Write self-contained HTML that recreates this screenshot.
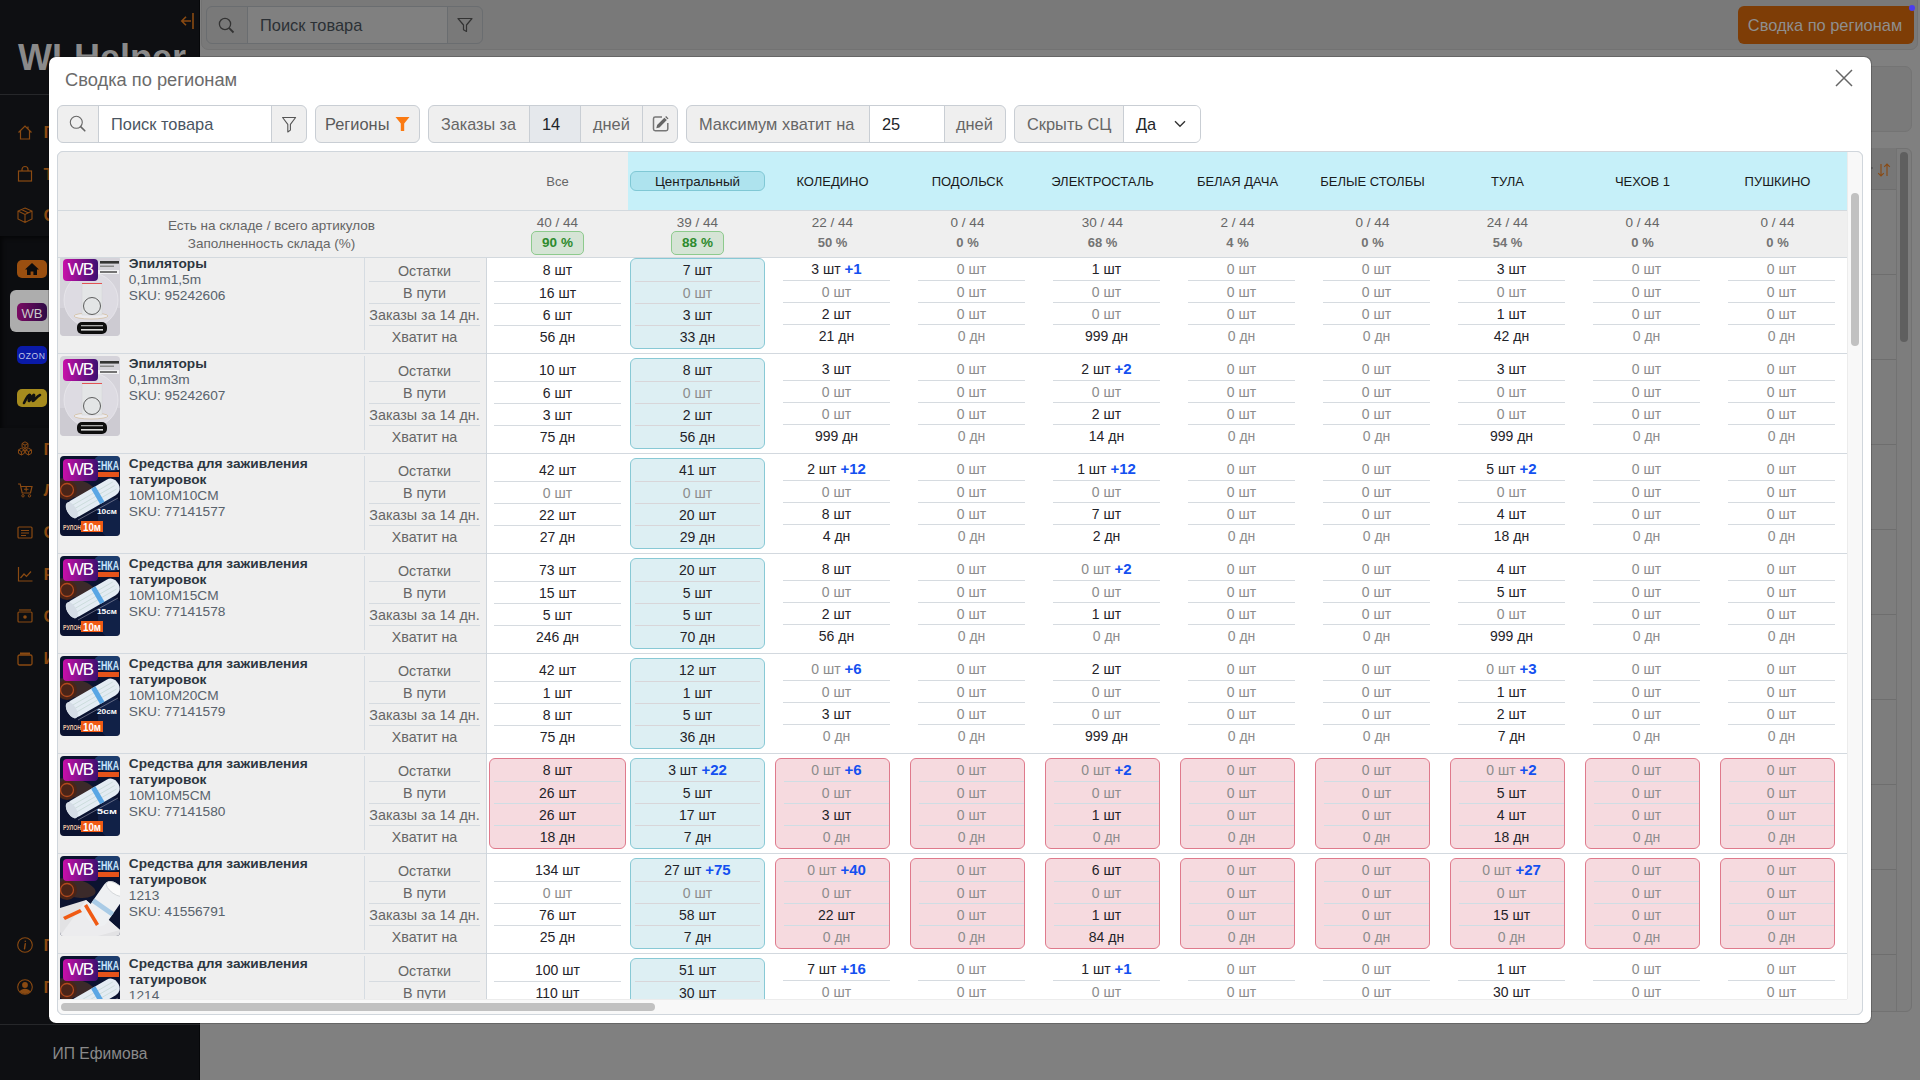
<!DOCTYPE html>
<html><head><meta charset="utf-8"><title>Сводка по регионам</title>
<style>
*{box-sizing:border-box;margin:0;padding:0}
html,body{width:1920px;height:1080px;overflow:hidden}
body{position:relative;background:#808080;font-family:"Liberation Sans",sans-serif;color:#212529}
.a{position:absolute}
.t{white-space:nowrap}
svg{position:absolute;overflow:visible}
</style></head>
<body>
<div class="a" style="left:0px;top:0px;width:200px;height:1080px;background:#0e0f12;border-right:1px solid #060709"></div><div class="a" style="left:0px;top:236px;width:199px;height:192px;background:#0c0d10;box-shadow:inset 2px 2px 4px rgba(0,0,0,0.6)"></div><div class="a" style="left:0px;top:94px;width:200px;height:1px;background:#26272a"></div><div class="a" style="left:0px;top:1024px;width:200px;height:1px;background:#26272a"></div><div class="a t" style="left:18.00px;top:39.53px;font-size:36px;line-height:36px;color:#8a8a8a;font-weight:700;">WLHelper</div><svg style="left:180px;top:12px" width="16" height="18"><path d="M13 1v16" stroke="#8a4a12" stroke-width="1.6" fill="none"/><path d="M11 9H2M6 4.8L1.8 9 6 13.2" stroke="#8a4a12" stroke-width="1.6" fill="none"/></svg><svg style="left:17px;top:124px" width="16" height="16"><path d="M1.5 8.5L8 2l6.5 6.5M3.5 6.5V15h9V6.5M11 2.5v2.5" stroke="#8a4a12" stroke-width="1.2" fill="none"/></svg><svg style="left:17px;top:166px" width="16" height="16"><rect x="1.5" y="5" width="13" height="10" stroke="#8a4a12" stroke-width="1.2" fill="none"/><path d="M5 5V3.5a3 3 0 0 1 6 0V5" stroke="#8a4a12" stroke-width="1.2" fill="none"/></svg><svg style="left:17px;top:207px" width="16" height="16"><path d="M8 1L15 4v8l-7 3.5L1 12V4z M1 4l7 3.5L15 4 M8 7.5v8 M4.5 2.5l7 3.5" stroke="#8a4a12" stroke-width="1.1" fill="none"/></svg><div class="a t" style="left:43.50px;top:123.61px;font-size:17px;line-height:17px;color:#8a4a12;font-weight:700;">Г</div><div class="a t" style="left:43.50px;top:165.61px;font-size:17px;line-height:17px;color:#8a4a12;font-weight:700;">Т</div><div class="a t" style="left:43.50px;top:206.61px;font-size:17px;line-height:17px;color:#8a4a12;font-weight:700;">С</div><div class="a" style="left:17px;top:260px;width:30px;height:18px;background:#9a4f10;border-radius:5px"></div><svg style="left:24px;top:262px" width="16" height="14"><path d="M8 1L1 7.5h2V13h3.6V9.5h2.8V13H13V7.5h2z" fill="#0b0c0e"/></svg><div class="a" style="left:10px;top:290px;width:45px;height:42px;background:#adadad;border-radius:6px"></div><div class="a" style="left:17px;top:303px;width:30px;height:18px;background:linear-gradient(90deg,#7a0b63,#2e0a45);border-radius:5px"></div><div class="a t" style="left:-268.00px;width:600px;text-align:center;top:306.50px;font-size:13px;line-height:13px;color:#c9c9c9;font-weight:400;">WB</div><div class="a" style="left:17px;top:346px;width:30px;height:18px;background:#0a1aa8;border-radius:5px"></div><div class="a t" style="left:-268.00px;width:600px;text-align:center;top:351.80px;font-size:8.5px;line-height:8.5px;color:#c0c4e6;font-weight:400;letter-spacing:0.6px">OZON</div><div class="a" style="left:17px;top:389px;width:30px;height:18px;background:#a68b1e;border-radius:5px"></div><svg style="left:22px;top:391px" width="20" height="14"><path d="M2 12 C5 6 7 3 8 4 C9 5 6 10 7 10 C8 10 11 3 12 4 C13 5 10 10 11 10 C12 10 15 5 18 4" stroke="#111" stroke-width="2.6" fill="none" stroke-linecap="round"/></svg><svg style="left:17px;top:441px" width="16" height="16"><path d="M8 0.8000000000000003L10.9444 2.5V5.9L8 7.6L5.0556 5.9V2.5ZM5.0556 2.5L8 4.2L10.9444 2.5M8 4.2V7.6M4.4 7.199999999999999L7.3444 8.9V12.299999999999999L4.4 14.0L1.4556000000000004 12.299999999999999V8.9ZM1.4556000000000004 8.9L4.4 10.6L7.3444 8.9M4.4 10.6V14.0M11.6 7.199999999999999L14.5444 8.9V12.299999999999999L11.6 14.0L8.6556 12.299999999999999V8.9ZM8.6556 8.9L11.6 10.6L14.5444 8.9M11.6 10.6V14.0" stroke="#8a4a12" stroke-width="1" fill="none" stroke-linejoin="round"/></svg><div class="a t" style="left:43.50px;top:440.61px;font-size:17px;line-height:17px;color:#8a4a12;font-weight:700;">П</div><svg style="left:17px;top:482px" width="16" height="16"><path d="M1 2h2.2l2 9h8.3l1.5-6.5H4" stroke="#8a4a12" stroke-width="1.2" fill="none"/><circle cx="6" cy="13.8" r="1.2" stroke="#8a4a12" fill="none"/><circle cx="12.5" cy="13.8" r="1.2" stroke="#8a4a12" fill="none"/><path d="M9.2 5v4.5M7 7.2h4.5" stroke="#8a4a12" stroke-width="1.1"/></svg><div class="a t" style="left:43.50px;top:481.61px;font-size:17px;line-height:17px;color:#8a4a12;font-weight:700;">Л</div><svg style="left:17px;top:524px" width="16" height="16"><rect x="1" y="3" width="14" height="11" rx="1" stroke="#8a4a12" stroke-width="1.2" fill="none"/><path d="M4 6.5h8M4 9h8M4 11.5h5" stroke="#8a4a12" stroke-width="1.1"/></svg><div class="a t" style="left:43.50px;top:523.61px;font-size:17px;line-height:17px;color:#8a4a12;font-weight:700;">С</div><svg style="left:17px;top:566px" width="16" height="16"><path d="M1.5 1v14h14 M3.5 12l3.5-4 2.5 2.5 4.5-5" stroke="#8a4a12" stroke-width="1.2" fill="none"/></svg><div class="a t" style="left:43.50px;top:565.61px;font-size:17px;line-height:17px;color:#8a4a12;font-weight:700;">Р</div><svg style="left:17px;top:608px" width="16" height="16"><rect x="1" y="4" width="14" height="10" rx="1" stroke="#8a4a12" stroke-width="1.2" fill="none"/><path d="M2 2h12" stroke="#8a4a12" stroke-width="1.2"/><circle cx="8" cy="9" r="1.8" fill="#8a4a12"/></svg><div class="a t" style="left:43.50px;top:607.61px;font-size:17px;line-height:17px;color:#8a4a12;font-weight:700;">С</div><svg style="left:17px;top:650px" width="16" height="16"><rect x="1" y="5" width="14" height="10" rx="1.5" stroke="#8a4a12" stroke-width="1.3" fill="none"/><path d="M3 4.5h10V2.5H3z" fill="#8a4a12"/></svg><div class="a t" style="left:43.50px;top:649.61px;font-size:17px;line-height:17px;color:#8a4a12;font-weight:700;">И</div><svg style="left:17px;top:937px" width="16" height="16"><circle cx="8" cy="8" r="7.3" stroke="#8a4a12" stroke-width="1.1" fill="none"/><circle cx="8.3" cy="4.3" r="0.8" fill="#8a4a12"/><path d="M8.3 6.6L7.5 11.8" stroke="#8a4a12" stroke-width="1.4" stroke-linecap="round"/></svg><div class="a t" style="left:43.50px;top:936.61px;font-size:17px;line-height:17px;color:#8a4a12;font-weight:700;">П</div><svg style="left:17px;top:979px" width="16" height="16"><circle cx="8" cy="8" r="7.3" stroke="#8a4a12" stroke-width="1.1" fill="none"/><circle cx="8" cy="6" r="2.9" fill="#8a4a12"/><path d="M2.6 12.6C3.8 10.6 5.8 9.8 8 9.8S12.2 10.6 13.4 12.6A7.3 7.3 0 0 1 2.6 12.6Z" fill="#8a4a12"/></svg><div class="a t" style="left:43.50px;top:978.61px;font-size:17px;line-height:17px;color:#8a4a12;font-weight:700;">П</div><div class="a t" style="left:-200.00px;width:600px;text-align:center;top:1045.79px;font-size:15.6px;line-height:15.6px;color:#8a8a8a;font-weight:400;">ИП Ефимова</div><div class="a" style="left:201px;top:-6px;width:1717px;height:56px;background:#797979;border-radius:7px;border:1px solid #727272"></div><div class="a" style="left:206px;top:6px;width:277px;height:38px;background:#797979;border:1px solid #6a6d70;border-radius:6px"></div><div class="a" style="left:247px;top:7px;width:201px;height:36px;background:#808080;border-left:1px solid #6a6d70;border-right:1px solid #6a6d70"></div><div class="a t" style="left:260.00px;top:17.12px;font-size:16.4px;line-height:16.4px;color:#2b3035;font-weight:400;">Поиск товара</div><svg style="left:218px;top:17px" width="18" height="18"><circle cx="7" cy="7" r="5.6" stroke="#333" stroke-width="1.3" fill="none"/><path d="M11.2 11.2l4.3 4.3" stroke="#333" stroke-width="1.8"/></svg><svg style="left:457px;top:17px" width="16" height="16"><path d="M1 1.5h14L9.5 8v6.5l-3-1.8V8z" stroke="#333" stroke-width="1.2" fill="none" stroke-linejoin="round"/></svg><div class="a" style="left:1738px;top:6px;width:176px;height:38px;background:#7e3d06;border-radius:6px"></div><div class="a t" style="left:1525.00px;width:600px;text-align:center;top:17.12px;font-size:16.4px;line-height:16.4px;color:#8f8f8f;font-weight:400;">Сводка по регионам</div><div class="a" style="left:1909px;top:5px;width:6px;height:6px;background:#4b3cf0;border-radius:50%"></div><div class="a" style="left:1850px;top:66px;width:62px;height:66px;background:#7a7a7a;border:1px solid #747474;border-radius:7px"></div><div class="a" style="left:1850px;top:148px;width:62px;height:864px;background:#7d7d7d;border:1px solid #727272;border-radius:6px"></div><div class="a" style="left:1850px;top:148px;width:46px;height:41px;background:#777777"></div><svg style="left:1876px;top:162px" width="16" height="16"><path d="M5 2v12M2.2 11.2L5 14l2.8-2.8 M11 14V2M8.2 4.8L11 2l2.8 2.8" stroke="#8a4a12" stroke-width="1.1" fill="none"/></svg><div class="a" style="left:1871px;top:167px;width:2px;height:2px;background:#5a5a5a;border-radius:50%"></div><div class="a" style="left:1850px;top:189px;width:46px;height:1px;background:#6e6e6e"></div><div class="a" style="left:1850px;top:274px;width:46px;height:1px;background:#6e6e6e"></div><div class="a" style="left:1850px;top:359px;width:46px;height:1px;background:#6e6e6e"></div><div class="a" style="left:1850px;top:444px;width:46px;height:1px;background:#6e6e6e"></div><div class="a" style="left:1850px;top:529px;width:46px;height:1px;background:#6e6e6e"></div><div class="a" style="left:1850px;top:614px;width:46px;height:1px;background:#6e6e6e"></div><div class="a" style="left:1850px;top:699px;width:46px;height:1px;background:#6e6e6e"></div><div class="a" style="left:1850px;top:784px;width:46px;height:1px;background:#6e6e6e"></div><div class="a" style="left:1850px;top:869px;width:46px;height:1px;background:#6e6e6e"></div><div class="a" style="left:1850px;top:954px;width:46px;height:1px;background:#6e6e6e"></div><div class="a" style="left:1896px;top:148px;width:1px;height:863px;background:#727272"></div><div class="a" style="left:1900px;top:152px;width:8px;height:190px;background:#5f5f5f;border-radius:4px"></div><div class="a" style="left:48px;top:56px;width:1824px;height:968px;background:#fff;border:1px solid rgba(0,0,0,0.2);background-clip:padding-box;border-radius:8px"></div><div class="a t" style="left:65.00px;top:71.01px;font-size:18.3px;line-height:18.3px;color:#6b6b6b;font-weight:400;">Сводка по регионам</div><svg style="left:1835px;top:69px" width="18" height="18"><path d="M1 1l16 16M17 1L1 17" stroke="#666" stroke-width="1.5"/></svg><div class="a" style="left:57px;top:105px;width:250px;height:38px;background:#efefef;border:1px solid #c9ced4;border-radius:6px;overflow:hidden"></div><div class="a" style="left:98px;top:106px;width:173px;height:36px;background:#fff;"></div><div class="a" style="left:98px;top:106px;width:1px;height:36px;background:#c9ced4"></div><div class="a" style="left:271px;top:106px;width:1px;height:36px;background:#c9ced4"></div><svg style="left:69px;top:115px" width="18" height="18"><circle cx="7.3" cy="7.3" r="6" stroke="#666" stroke-width="1.1" fill="none"/><path d="M11.6 11.6l4.2 4.2" stroke="#666" stroke-width="1.6" stroke-linecap="round"/></svg><div class="a t" style="left:111.00px;top:116.32px;font-size:16.4px;line-height:16.4px;color:#4a5562;font-weight:400;">Поиск товара</div><svg style="left:280px;top:116px" width="17" height="17"><path d="M2.6 1.5h13L10.4 8.3v5.8l-2.6 1.9V8.3z" stroke="#555" stroke-width="1.1" fill="none" stroke-linejoin="round"/></svg><div class="a" style="left:315px;top:105px;width:105px;height:38px;background:#efefef;border:1px solid #c9ced4;border-radius:6px;overflow:hidden"></div><div class="a t" style="left:325.00px;top:116.32px;font-size:16.4px;line-height:16.4px;color:#5a5a5a;font-weight:400;">Регионы</div><svg style="left:395px;top:116px" width="15" height="16"><path d="M0.5 1h14L9.2 7.5V15H5.8V7.5z" fill="#fb7a12"/></svg><div class="a" style="left:428px;top:105px;width:250px;height:38px;background:#efefef;border:1px solid #c9ced4;border-radius:6px;overflow:hidden"></div><div class="a" style="left:529px;top:106px;width:51px;height:36px;background:#e5e8ec;"></div><div class="a" style="left:529px;top:106px;width:1px;height:36px;background:#c9ced4"></div><div class="a" style="left:580px;top:106px;width:1px;height:36px;background:#c9ced4"></div><div class="a" style="left:642px;top:106px;width:1px;height:36px;background:#c9ced4"></div><div class="a t" style="left:441.00px;top:116.49px;font-size:16.2px;line-height:16.2px;color:#666;font-weight:400;">Заказы за</div><div class="a t" style="left:542.00px;top:116.32px;font-size:16.4px;line-height:16.4px;color:#212529;font-weight:400;">14</div><div class="a t" style="left:593.00px;top:116.32px;font-size:16.4px;line-height:16.4px;color:#666;font-weight:400;">дней</div><svg style="left:650px;top:113px" width="20" height="20"><path d="M12 4H5.2A1.7 1.7 0 0 0 3.5 5.7V16.1A1.7 1.7 0 0 0 5.2 17.8H16.1A1.7 1.7 0 0 0 17.8 16.1V10" stroke="#777" stroke-width="1.5" fill="none"/><path d="M6.3 15.2L7.1 12L14.4 4.7L16.8 7.1L9.5 14.4Z" fill="#666"/><path d="M15.2 3.9L16.1 3L18.5 5.4L17.6 6.3Z" fill="#666"/></svg><div class="a" style="left:686px;top:105px;width:320px;height:38px;background:#efefef;border:1px solid #c9ced4;border-radius:6px;overflow:hidden"></div><div class="a" style="left:869px;top:106px;width:75px;height:36px;background:#fff;"></div><div class="a" style="left:869px;top:106px;width:1px;height:36px;background:#c9ced4"></div><div class="a" style="left:944px;top:106px;width:1px;height:36px;background:#c9ced4"></div><div class="a t" style="left:699.00px;top:116.32px;font-size:16.4px;line-height:16.4px;color:#666;font-weight:400;">Максимум хватит на</div><div class="a t" style="left:882.00px;top:116.32px;font-size:16.4px;line-height:16.4px;color:#212529;font-weight:400;">25</div><div class="a t" style="left:956.00px;top:116.32px;font-size:16.4px;line-height:16.4px;color:#666;font-weight:400;">дней</div><div class="a" style="left:1014px;top:105px;width:187px;height:38px;background:#efefef;border:1px solid #c9ced4;border-radius:6px;overflow:hidden"></div><div class="a" style="left:1123px;top:106px;width:77px;height:36px;background:#fff;border-radius:0 5px 5px 0;"></div><div class="a" style="left:1123px;top:106px;width:1px;height:36px;background:#c9ced4"></div><div class="a t" style="left:1027.00px;top:116.32px;font-size:16.4px;line-height:16.4px;color:#666;font-weight:400;">Скрыть СЦ</div><div class="a t" style="left:1136.00px;top:116.32px;font-size:16.4px;line-height:16.4px;color:#212529;font-weight:400;">Да</div><svg style="left:1174px;top:119px" width="13" height="10"><path d="M1 2.2L6 7.2l5-5" stroke="#333" stroke-width="1.4" fill="none"/></svg><div class="a" style="left:57px;top:151px;width:1806px;height:864px;background:#fff;border:1px solid #dcdfe3;border-radius:6px"></div><div class="a" style="left:58px;top:152px;width:570px;height:58px;background:#efefef;border-radius:5px 0 0 0"></div><div class="a" style="left:628px;top:152px;width:1219px;height:58px;background:#c6f0f9"></div><div class="a" style="left:58px;top:210px;width:1790px;height:1px;background:#d3d9de"></div><div class="a" style="left:58px;top:211px;width:1790px;height:46px;background:#efefef"></div><div class="a" style="left:58px;top:257px;width:1790px;height:1px;background:#d3d9de"></div><div class="a t" style="left:257.50px;width:600px;text-align:center;top:174.80px;font-size:13px;line-height:13px;color:#666;font-weight:400;">Все</div><div class="a" style="left:630px;top:171px;width:135px;height:20px;background:#aee3ee;border:1px solid #80c8d5;border-radius:6px"></div><div class="a t" style="left:397.50px;width:600px;text-align:center;top:175.46px;font-size:13.4px;line-height:13.4px;color:#1a1a1a;font-weight:400;">Центральный</div><div class="a t" style="left:532.50px;width:600px;text-align:center;top:175.00px;font-size:13px;line-height:13px;color:#1a1a1a;font-weight:400;">КОЛЕДИНО</div><div class="a t" style="left:667.50px;width:600px;text-align:center;top:175.00px;font-size:13px;line-height:13px;color:#1a1a1a;font-weight:400;">ПОДОЛЬСК</div><div class="a t" style="left:802.50px;width:600px;text-align:center;top:175.00px;font-size:13px;line-height:13px;color:#1a1a1a;font-weight:400;">ЭЛЕКТРОСТАЛЬ</div><div class="a t" style="left:937.50px;width:600px;text-align:center;top:175.00px;font-size:13px;line-height:13px;color:#1a1a1a;font-weight:400;">БЕЛАЯ ДАЧА</div><div class="a t" style="left:1072.50px;width:600px;text-align:center;top:175.00px;font-size:13px;line-height:13px;color:#1a1a1a;font-weight:400;">БЕЛЫЕ СТОЛБЫ</div><div class="a t" style="left:1207.50px;width:600px;text-align:center;top:175.00px;font-size:13px;line-height:13px;color:#1a1a1a;font-weight:400;">ТУЛА</div><div class="a t" style="left:1342.50px;width:600px;text-align:center;top:175.00px;font-size:13px;line-height:13px;color:#1a1a1a;font-weight:400;">ЧЕХОВ 1</div><div class="a t" style="left:1477.50px;width:600px;text-align:center;top:175.00px;font-size:13px;line-height:13px;color:#1a1a1a;font-weight:400;">ПУШКИНО</div><div class="a t" style="left:-28.50px;width:600px;text-align:center;top:218.57px;font-size:13.5px;line-height:13.5px;color:#666;font-weight:400;">Есть на складе / всего артикулов</div><div class="a t" style="left:-28.50px;width:600px;text-align:center;top:236.57px;font-size:13.5px;line-height:13.5px;color:#666;font-weight:400;">Заполненность склада (%)</div><div class="a t" style="left:257.50px;width:600px;text-align:center;top:216.07px;font-size:13.5px;line-height:13.5px;color:#666;font-weight:400;">40 / 44</div><div class="a" style="left:531.0px;top:231px;width:53px;height:24px;background:#d5e4d5;border:1px solid #8dca8d;border-radius:5px"></div><div class="a t" style="left:257.50px;width:600px;text-align:center;top:235.57px;font-size:13.5px;line-height:13.5px;color:#2e8b2e;font-weight:700;">90 %</div><div class="a t" style="left:397.50px;width:600px;text-align:center;top:216.07px;font-size:13.5px;line-height:13.5px;color:#666;font-weight:400;">39 / 44</div><div class="a" style="left:671.0px;top:231px;width:53px;height:24px;background:#d5e4d5;border:1px solid #8dca8d;border-radius:5px"></div><div class="a t" style="left:397.50px;width:600px;text-align:center;top:235.57px;font-size:13.5px;line-height:13.5px;color:#2e8b2e;font-weight:700;">88 %</div><div class="a t" style="left:532.50px;width:600px;text-align:center;top:216.07px;font-size:13.5px;line-height:13.5px;color:#666;font-weight:400;">22 / 44</div><div class="a t" style="left:532.50px;width:600px;text-align:center;top:235.60px;font-size:13px;line-height:13px;color:#747474;font-weight:700;">50 %</div><div class="a t" style="left:667.50px;width:600px;text-align:center;top:216.07px;font-size:13.5px;line-height:13.5px;color:#666;font-weight:400;">0 / 44</div><div class="a t" style="left:667.50px;width:600px;text-align:center;top:235.60px;font-size:13px;line-height:13px;color:#747474;font-weight:700;">0 %</div><div class="a t" style="left:802.50px;width:600px;text-align:center;top:216.07px;font-size:13.5px;line-height:13.5px;color:#666;font-weight:400;">30 / 44</div><div class="a t" style="left:802.50px;width:600px;text-align:center;top:235.60px;font-size:13px;line-height:13px;color:#747474;font-weight:700;">68 %</div><div class="a t" style="left:937.50px;width:600px;text-align:center;top:216.07px;font-size:13.5px;line-height:13.5px;color:#666;font-weight:400;">2 / 44</div><div class="a t" style="left:937.50px;width:600px;text-align:center;top:235.60px;font-size:13px;line-height:13px;color:#747474;font-weight:700;">4 %</div><div class="a t" style="left:1072.50px;width:600px;text-align:center;top:216.07px;font-size:13.5px;line-height:13.5px;color:#666;font-weight:400;">0 / 44</div><div class="a t" style="left:1072.50px;width:600px;text-align:center;top:235.60px;font-size:13px;line-height:13px;color:#747474;font-weight:700;">0 %</div><div class="a t" style="left:1207.50px;width:600px;text-align:center;top:216.07px;font-size:13.5px;line-height:13.5px;color:#666;font-weight:400;">24 / 44</div><div class="a t" style="left:1207.50px;width:600px;text-align:center;top:235.60px;font-size:13px;line-height:13px;color:#747474;font-weight:700;">54 %</div><div class="a t" style="left:1342.50px;width:600px;text-align:center;top:216.07px;font-size:13.5px;line-height:13.5px;color:#666;font-weight:400;">0 / 44</div><div class="a t" style="left:1342.50px;width:600px;text-align:center;top:235.60px;font-size:13px;line-height:13px;color:#747474;font-weight:700;">0 %</div><div class="a t" style="left:1477.50px;width:600px;text-align:center;top:216.07px;font-size:13.5px;line-height:13.5px;color:#666;font-weight:400;">0 / 44</div><div class="a t" style="left:1477.50px;width:600px;text-align:center;top:235.60px;font-size:13px;line-height:13px;color:#747474;font-weight:700;">0 %</div><div class="a" style="left:58px;top:258px;width:1790px;height:741px;overflow:hidden"><div class="a" style="left:0px;top:-5px;width:428px;height:100px;background:#efefef"></div><div class="a" style="left:0px;top:-5px;width:1790px;height:1px;background:#d3d9df"></div><div class="a" style="left:306px;top:-2px;width:1px;height:94px;background:#d6dce2"></div><div class="a" style="left:428px;top:-5px;width:1px;height:100px;background:#d0d6dc"></div><svg style="left:2px;top:-2px;border-radius:4px" width="60" height="80" viewBox="0 0 60 80"><clipPath id="c2-2"><rect width="60" height="80" rx="4"/></clipPath><g clip-path="url(#c2-2)"><rect width="60" height="80" fill="#d5d3da"/><rect y="52" width="60" height="28" fill="#cdcbd2"/><circle cx="31" cy="44" r="27" fill="#dddbe2" stroke="#e8e7ec" stroke-width="0.8"/><ellipse cx="31" cy="60" rx="17" ry="3" fill="#ecebef" stroke="#c9ab78" stroke-width="0.5"/><rect x="22" y="27" width="20" height="32" fill="#e3e5e6" stroke="#d2d4d6" stroke-width="0.5"/><rect x="22" y="27" width="20" height="1" fill="#e25454"/><circle cx="32" cy="50" r="8.5" fill="none" stroke="#3a3a3a" stroke-width="0.8"/><rect x="17" y="66" width="30" height="12" rx="5" fill="#0e0e0e"/><rect x="21" y="69" width="22" height="1.3" fill="#aaa"/><rect x="21" y="73" width="22" height="1.6" fill="#ddd"/><rect x="40" y="5" width="19" height="2.6" fill="#333"/><rect x="40" y="9.5" width="14" height="1.5" fill="#888"/><rect x="38" y="14" width="21" height="4" fill="#f2f2f4"/><rect x="40" y="15.2" width="17" height="1.6" fill="#555"/></g></svg><div class="a" style="left:5px;top:1px;width:35px;height:22px;border-radius:4px;background:linear-gradient(90deg,#c80fa9,#3c0f70);color:#fff;font:17px/22px 'Liberation Sans';text-align:center;letter-spacing:-1px">WB</div><div class="a t" style="left:70.80px;top:-1.00px;font-size:13.7px;line-height:13.7px;color:#2c3640;font-weight:700;">Эпиляторы</div><div class="a t" style="left:70.80px;top:15.00px;font-size:13.7px;line-height:13.7px;color:#58626c;font-weight:400;">0,1mm1,5m</div><div class="a t" style="left:70.80px;top:31.00px;font-size:13.7px;line-height:13.7px;color:#58626c;font-weight:400;">SKU: 95242606</div><div class="a t" style="left:66.50px;width:600px;text-align:center;top:5.70px;font-size:14.3px;line-height:14.3px;color:#666;font-weight:400;">Остатки</div><div class="a t" style="left:66.50px;width:600px;text-align:center;top:27.90px;font-size:14.3px;line-height:14.3px;color:#666;font-weight:400;">В пути</div><div class="a t" style="left:66.50px;width:600px;text-align:center;top:49.90px;font-size:14.3px;line-height:14.3px;color:#666;font-weight:400;">Заказы за 14 дн.</div><div class="a t" style="left:66.50px;width:600px;text-align:center;top:71.90px;font-size:14.3px;line-height:14.3px;color:#666;font-weight:400;">Хватит на</div><div class="a" style="left:311px;top:23px;width:111px;height:1px;background:#d6dbe0"></div><div class="a" style="left:311px;top:45px;width:111px;height:1px;background:#d6dbe0"></div><div class="a" style="left:311px;top:67px;width:111px;height:1px;background:#d6dbe0"></div><div class="a" style="left:436px;top:23px;width:127px;height:1px;background:#d6dbe0"></div><div class="a" style="left:436px;top:45px;width:127px;height:1px;background:#d6dbe0"></div><div class="a" style="left:436px;top:67px;width:127px;height:1px;background:#d6dbe0"></div><div class="a t" style="left:199.50px;width:600px;text-align:center;top:5.15px;font-size:14px;line-height:14px;color:#1f2329;font-weight:400;"><span style="color:#1f2329">8 шт</span></div><div class="a t" style="left:199.50px;width:600px;text-align:center;top:28.15px;font-size:14px;line-height:14px;color:#1f2329;font-weight:400;"><span style="color:#1f2329">16 шт</span></div><div class="a t" style="left:199.50px;width:600px;text-align:center;top:50.15px;font-size:14px;line-height:14px;color:#1f2329;font-weight:400;"><span style="color:#1f2329">6 шт</span></div><div class="a t" style="left:199.50px;width:600px;text-align:center;top:72.15px;font-size:14px;line-height:14px;color:#1f2329;font-weight:400;"><span style="color:#1f2329">56 дн</span></div><div class="a" style="left:572px;top:0px;width:135px;height:91px;background:#ddeff3;border:1px solid #88c9d5;border-radius:6px"></div><div class="a" style="left:577px;top:23px;width:125px;height:1px;background:#d8d6d9"></div><div class="a" style="left:577px;top:45px;width:125px;height:1px;background:#d8d6d9"></div><div class="a" style="left:577px;top:67px;width:125px;height:1px;background:#d8d6d9"></div><div class="a t" style="left:339.50px;width:600px;text-align:center;top:5.15px;font-size:14px;line-height:14px;color:#1f2329;font-weight:400;"><span style="color:#1f2329">7 шт</span></div><div class="a t" style="left:339.50px;width:600px;text-align:center;top:28.15px;font-size:14px;line-height:14px;color:#1f2329;font-weight:400;"><span style="color:#8c8c8c">0 шт</span></div><div class="a t" style="left:339.50px;width:600px;text-align:center;top:50.15px;font-size:14px;line-height:14px;color:#1f2329;font-weight:400;"><span style="color:#1f2329">3 шт</span></div><div class="a t" style="left:339.50px;width:600px;text-align:center;top:72.15px;font-size:14px;line-height:14px;color:#1f2329;font-weight:400;"><span style="color:#1f2329">33 дн</span></div><div class="a" style="left:725px;top:22px;width:107px;height:1px;background:#d6dbe0"></div><div class="a" style="left:725px;top:44px;width:107px;height:1px;background:#d6dbe0"></div><div class="a" style="left:725px;top:66px;width:107px;height:1px;background:#d6dbe0"></div><div class="a t" style="left:478.50px;width:600px;text-align:center;top:4.15px;font-size:14px;line-height:14px;color:#1f2329;font-weight:400;"><span style="color:#1f2329">3 шт</span> <b style="color:#1450f0;font-size:15px">+1</b></div><div class="a t" style="left:478.50px;width:600px;text-align:center;top:27.15px;font-size:14px;line-height:14px;color:#1f2329;font-weight:400;"><span style="color:#8c8c8c">0 шт</span></div><div class="a t" style="left:478.50px;width:600px;text-align:center;top:49.15px;font-size:14px;line-height:14px;color:#1f2329;font-weight:400;"><span style="color:#1f2329">2 шт</span></div><div class="a t" style="left:478.50px;width:600px;text-align:center;top:71.15px;font-size:14px;line-height:14px;color:#1f2329;font-weight:400;"><span style="color:#1f2329">21 дн</span></div><div class="a" style="left:860px;top:22px;width:107px;height:1px;background:#d6dbe0"></div><div class="a" style="left:860px;top:44px;width:107px;height:1px;background:#d6dbe0"></div><div class="a" style="left:860px;top:66px;width:107px;height:1px;background:#d6dbe0"></div><div class="a t" style="left:613.50px;width:600px;text-align:center;top:4.15px;font-size:14px;line-height:14px;color:#1f2329;font-weight:400;"><span style="color:#8c8c8c">0 шт</span></div><div class="a t" style="left:613.50px;width:600px;text-align:center;top:27.15px;font-size:14px;line-height:14px;color:#1f2329;font-weight:400;"><span style="color:#8c8c8c">0 шт</span></div><div class="a t" style="left:613.50px;width:600px;text-align:center;top:49.15px;font-size:14px;line-height:14px;color:#1f2329;font-weight:400;"><span style="color:#8c8c8c">0 шт</span></div><div class="a t" style="left:613.50px;width:600px;text-align:center;top:71.15px;font-size:14px;line-height:14px;color:#1f2329;font-weight:400;"><span style="color:#8c8c8c">0 дн</span></div><div class="a" style="left:995px;top:22px;width:107px;height:1px;background:#d6dbe0"></div><div class="a" style="left:995px;top:44px;width:107px;height:1px;background:#d6dbe0"></div><div class="a" style="left:995px;top:66px;width:107px;height:1px;background:#d6dbe0"></div><div class="a t" style="left:748.50px;width:600px;text-align:center;top:4.15px;font-size:14px;line-height:14px;color:#1f2329;font-weight:400;"><span style="color:#1f2329">1 шт</span></div><div class="a t" style="left:748.50px;width:600px;text-align:center;top:27.15px;font-size:14px;line-height:14px;color:#1f2329;font-weight:400;"><span style="color:#8c8c8c">0 шт</span></div><div class="a t" style="left:748.50px;width:600px;text-align:center;top:49.15px;font-size:14px;line-height:14px;color:#1f2329;font-weight:400;"><span style="color:#8c8c8c">0 шт</span></div><div class="a t" style="left:748.50px;width:600px;text-align:center;top:71.15px;font-size:14px;line-height:14px;color:#1f2329;font-weight:400;"><span style="color:#1f2329">999 дн</span></div><div class="a" style="left:1130px;top:22px;width:107px;height:1px;background:#d6dbe0"></div><div class="a" style="left:1130px;top:44px;width:107px;height:1px;background:#d6dbe0"></div><div class="a" style="left:1130px;top:66px;width:107px;height:1px;background:#d6dbe0"></div><div class="a t" style="left:883.50px;width:600px;text-align:center;top:4.15px;font-size:14px;line-height:14px;color:#1f2329;font-weight:400;"><span style="color:#8c8c8c">0 шт</span></div><div class="a t" style="left:883.50px;width:600px;text-align:center;top:27.15px;font-size:14px;line-height:14px;color:#1f2329;font-weight:400;"><span style="color:#8c8c8c">0 шт</span></div><div class="a t" style="left:883.50px;width:600px;text-align:center;top:49.15px;font-size:14px;line-height:14px;color:#1f2329;font-weight:400;"><span style="color:#8c8c8c">0 шт</span></div><div class="a t" style="left:883.50px;width:600px;text-align:center;top:71.15px;font-size:14px;line-height:14px;color:#1f2329;font-weight:400;"><span style="color:#8c8c8c">0 дн</span></div><div class="a" style="left:1265px;top:22px;width:107px;height:1px;background:#d6dbe0"></div><div class="a" style="left:1265px;top:44px;width:107px;height:1px;background:#d6dbe0"></div><div class="a" style="left:1265px;top:66px;width:107px;height:1px;background:#d6dbe0"></div><div class="a t" style="left:1018.50px;width:600px;text-align:center;top:4.15px;font-size:14px;line-height:14px;color:#1f2329;font-weight:400;"><span style="color:#8c8c8c">0 шт</span></div><div class="a t" style="left:1018.50px;width:600px;text-align:center;top:27.15px;font-size:14px;line-height:14px;color:#1f2329;font-weight:400;"><span style="color:#8c8c8c">0 шт</span></div><div class="a t" style="left:1018.50px;width:600px;text-align:center;top:49.15px;font-size:14px;line-height:14px;color:#1f2329;font-weight:400;"><span style="color:#8c8c8c">0 шт</span></div><div class="a t" style="left:1018.50px;width:600px;text-align:center;top:71.15px;font-size:14px;line-height:14px;color:#1f2329;font-weight:400;"><span style="color:#8c8c8c">0 дн</span></div><div class="a" style="left:1400px;top:22px;width:107px;height:1px;background:#d6dbe0"></div><div class="a" style="left:1400px;top:44px;width:107px;height:1px;background:#d6dbe0"></div><div class="a" style="left:1400px;top:66px;width:107px;height:1px;background:#d6dbe0"></div><div class="a t" style="left:1153.50px;width:600px;text-align:center;top:4.15px;font-size:14px;line-height:14px;color:#1f2329;font-weight:400;"><span style="color:#1f2329">3 шт</span></div><div class="a t" style="left:1153.50px;width:600px;text-align:center;top:27.15px;font-size:14px;line-height:14px;color:#1f2329;font-weight:400;"><span style="color:#8c8c8c">0 шт</span></div><div class="a t" style="left:1153.50px;width:600px;text-align:center;top:49.15px;font-size:14px;line-height:14px;color:#1f2329;font-weight:400;"><span style="color:#1f2329">1 шт</span></div><div class="a t" style="left:1153.50px;width:600px;text-align:center;top:71.15px;font-size:14px;line-height:14px;color:#1f2329;font-weight:400;"><span style="color:#1f2329">42 дн</span></div><div class="a" style="left:1535px;top:22px;width:107px;height:1px;background:#d6dbe0"></div><div class="a" style="left:1535px;top:44px;width:107px;height:1px;background:#d6dbe0"></div><div class="a" style="left:1535px;top:66px;width:107px;height:1px;background:#d6dbe0"></div><div class="a t" style="left:1288.50px;width:600px;text-align:center;top:4.15px;font-size:14px;line-height:14px;color:#1f2329;font-weight:400;"><span style="color:#8c8c8c">0 шт</span></div><div class="a t" style="left:1288.50px;width:600px;text-align:center;top:27.15px;font-size:14px;line-height:14px;color:#1f2329;font-weight:400;"><span style="color:#8c8c8c">0 шт</span></div><div class="a t" style="left:1288.50px;width:600px;text-align:center;top:49.15px;font-size:14px;line-height:14px;color:#1f2329;font-weight:400;"><span style="color:#8c8c8c">0 шт</span></div><div class="a t" style="left:1288.50px;width:600px;text-align:center;top:71.15px;font-size:14px;line-height:14px;color:#1f2329;font-weight:400;"><span style="color:#8c8c8c">0 дн</span></div><div class="a" style="left:1670px;top:22px;width:107px;height:1px;background:#d6dbe0"></div><div class="a" style="left:1670px;top:44px;width:107px;height:1px;background:#d6dbe0"></div><div class="a" style="left:1670px;top:66px;width:107px;height:1px;background:#d6dbe0"></div><div class="a t" style="left:1423.50px;width:600px;text-align:center;top:4.15px;font-size:14px;line-height:14px;color:#1f2329;font-weight:400;"><span style="color:#8c8c8c">0 шт</span></div><div class="a t" style="left:1423.50px;width:600px;text-align:center;top:27.15px;font-size:14px;line-height:14px;color:#1f2329;font-weight:400;"><span style="color:#8c8c8c">0 шт</span></div><div class="a t" style="left:1423.50px;width:600px;text-align:center;top:49.15px;font-size:14px;line-height:14px;color:#1f2329;font-weight:400;"><span style="color:#8c8c8c">0 шт</span></div><div class="a t" style="left:1423.50px;width:600px;text-align:center;top:71.15px;font-size:14px;line-height:14px;color:#1f2329;font-weight:400;"><span style="color:#8c8c8c">0 дн</span></div><div class="a" style="left:0px;top:95px;width:428px;height:100px;background:#efefef"></div><div class="a" style="left:0px;top:95px;width:1790px;height:1px;background:#d3d9df"></div><div class="a" style="left:306px;top:98px;width:1px;height:94px;background:#d6dce2"></div><div class="a" style="left:428px;top:95px;width:1px;height:100px;background:#d0d6dc"></div><svg style="left:2px;top:98px;border-radius:4px" width="60" height="80" viewBox="0 0 60 80"><clipPath id="c298"><rect width="60" height="80" rx="4"/></clipPath><g clip-path="url(#c298)"><rect width="60" height="80" fill="#d5d3da"/><rect y="52" width="60" height="28" fill="#cdcbd2"/><circle cx="31" cy="44" r="27" fill="#dddbe2" stroke="#e8e7ec" stroke-width="0.8"/><ellipse cx="31" cy="60" rx="17" ry="3" fill="#ecebef" stroke="#c9ab78" stroke-width="0.5"/><rect x="22" y="27" width="20" height="32" fill="#e3e5e6" stroke="#d2d4d6" stroke-width="0.5"/><rect x="22" y="27" width="20" height="1" fill="#e25454"/><circle cx="32" cy="50" r="8.5" fill="none" stroke="#3a3a3a" stroke-width="0.8"/><rect x="17" y="66" width="30" height="12" rx="5" fill="#0e0e0e"/><rect x="21" y="69" width="22" height="1.3" fill="#aaa"/><rect x="21" y="73" width="22" height="1.6" fill="#ddd"/><rect x="40" y="5" width="19" height="2.6" fill="#333"/><rect x="40" y="9.5" width="14" height="1.5" fill="#888"/><rect x="38" y="14" width="21" height="4" fill="#f2f2f4"/><rect x="40" y="15.2" width="17" height="1.6" fill="#555"/></g></svg><div class="a" style="left:5px;top:101px;width:35px;height:22px;border-radius:4px;background:linear-gradient(90deg,#c80fa9,#3c0f70);color:#fff;font:17px/22px 'Liberation Sans';text-align:center;letter-spacing:-1px">WB</div><div class="a t" style="left:70.80px;top:99.00px;font-size:13.7px;line-height:13.7px;color:#2c3640;font-weight:700;">Эпиляторы</div><div class="a t" style="left:70.80px;top:115.00px;font-size:13.7px;line-height:13.7px;color:#58626c;font-weight:400;">0,1mm3m</div><div class="a t" style="left:70.80px;top:131.00px;font-size:13.7px;line-height:13.7px;color:#58626c;font-weight:400;">SKU: 95242607</div><div class="a t" style="left:66.50px;width:600px;text-align:center;top:105.70px;font-size:14.3px;line-height:14.3px;color:#666;font-weight:400;">Остатки</div><div class="a t" style="left:66.50px;width:600px;text-align:center;top:127.90px;font-size:14.3px;line-height:14.3px;color:#666;font-weight:400;">В пути</div><div class="a t" style="left:66.50px;width:600px;text-align:center;top:149.90px;font-size:14.3px;line-height:14.3px;color:#666;font-weight:400;">Заказы за 14 дн.</div><div class="a t" style="left:66.50px;width:600px;text-align:center;top:171.90px;font-size:14.3px;line-height:14.3px;color:#666;font-weight:400;">Хватит на</div><div class="a" style="left:311px;top:123px;width:111px;height:1px;background:#d6dbe0"></div><div class="a" style="left:311px;top:145px;width:111px;height:1px;background:#d6dbe0"></div><div class="a" style="left:311px;top:167px;width:111px;height:1px;background:#d6dbe0"></div><div class="a" style="left:436px;top:123px;width:127px;height:1px;background:#d6dbe0"></div><div class="a" style="left:436px;top:145px;width:127px;height:1px;background:#d6dbe0"></div><div class="a" style="left:436px;top:167px;width:127px;height:1px;background:#d6dbe0"></div><div class="a t" style="left:199.50px;width:600px;text-align:center;top:105.15px;font-size:14px;line-height:14px;color:#1f2329;font-weight:400;"><span style="color:#1f2329">10 шт</span></div><div class="a t" style="left:199.50px;width:600px;text-align:center;top:128.15px;font-size:14px;line-height:14px;color:#1f2329;font-weight:400;"><span style="color:#1f2329">6 шт</span></div><div class="a t" style="left:199.50px;width:600px;text-align:center;top:150.15px;font-size:14px;line-height:14px;color:#1f2329;font-weight:400;"><span style="color:#1f2329">3 шт</span></div><div class="a t" style="left:199.50px;width:600px;text-align:center;top:172.15px;font-size:14px;line-height:14px;color:#1f2329;font-weight:400;"><span style="color:#1f2329">75 дн</span></div><div class="a" style="left:572px;top:100px;width:135px;height:91px;background:#ddeff3;border:1px solid #88c9d5;border-radius:6px"></div><div class="a" style="left:577px;top:123px;width:125px;height:1px;background:#d8d6d9"></div><div class="a" style="left:577px;top:145px;width:125px;height:1px;background:#d8d6d9"></div><div class="a" style="left:577px;top:167px;width:125px;height:1px;background:#d8d6d9"></div><div class="a t" style="left:339.50px;width:600px;text-align:center;top:105.15px;font-size:14px;line-height:14px;color:#1f2329;font-weight:400;"><span style="color:#1f2329">8 шт</span></div><div class="a t" style="left:339.50px;width:600px;text-align:center;top:128.15px;font-size:14px;line-height:14px;color:#1f2329;font-weight:400;"><span style="color:#8c8c8c">0 шт</span></div><div class="a t" style="left:339.50px;width:600px;text-align:center;top:150.15px;font-size:14px;line-height:14px;color:#1f2329;font-weight:400;"><span style="color:#1f2329">2 шт</span></div><div class="a t" style="left:339.50px;width:600px;text-align:center;top:172.15px;font-size:14px;line-height:14px;color:#1f2329;font-weight:400;"><span style="color:#1f2329">56 дн</span></div><div class="a" style="left:725px;top:122px;width:107px;height:1px;background:#d6dbe0"></div><div class="a" style="left:725px;top:144px;width:107px;height:1px;background:#d6dbe0"></div><div class="a" style="left:725px;top:166px;width:107px;height:1px;background:#d6dbe0"></div><div class="a t" style="left:478.50px;width:600px;text-align:center;top:104.15px;font-size:14px;line-height:14px;color:#1f2329;font-weight:400;"><span style="color:#1f2329">3 шт</span></div><div class="a t" style="left:478.50px;width:600px;text-align:center;top:127.15px;font-size:14px;line-height:14px;color:#1f2329;font-weight:400;"><span style="color:#8c8c8c">0 шт</span></div><div class="a t" style="left:478.50px;width:600px;text-align:center;top:149.15px;font-size:14px;line-height:14px;color:#1f2329;font-weight:400;"><span style="color:#8c8c8c">0 шт</span></div><div class="a t" style="left:478.50px;width:600px;text-align:center;top:171.15px;font-size:14px;line-height:14px;color:#1f2329;font-weight:400;"><span style="color:#1f2329">999 дн</span></div><div class="a" style="left:860px;top:122px;width:107px;height:1px;background:#d6dbe0"></div><div class="a" style="left:860px;top:144px;width:107px;height:1px;background:#d6dbe0"></div><div class="a" style="left:860px;top:166px;width:107px;height:1px;background:#d6dbe0"></div><div class="a t" style="left:613.50px;width:600px;text-align:center;top:104.15px;font-size:14px;line-height:14px;color:#1f2329;font-weight:400;"><span style="color:#8c8c8c">0 шт</span></div><div class="a t" style="left:613.50px;width:600px;text-align:center;top:127.15px;font-size:14px;line-height:14px;color:#1f2329;font-weight:400;"><span style="color:#8c8c8c">0 шт</span></div><div class="a t" style="left:613.50px;width:600px;text-align:center;top:149.15px;font-size:14px;line-height:14px;color:#1f2329;font-weight:400;"><span style="color:#8c8c8c">0 шт</span></div><div class="a t" style="left:613.50px;width:600px;text-align:center;top:171.15px;font-size:14px;line-height:14px;color:#1f2329;font-weight:400;"><span style="color:#8c8c8c">0 дн</span></div><div class="a" style="left:995px;top:122px;width:107px;height:1px;background:#d6dbe0"></div><div class="a" style="left:995px;top:144px;width:107px;height:1px;background:#d6dbe0"></div><div class="a" style="left:995px;top:166px;width:107px;height:1px;background:#d6dbe0"></div><div class="a t" style="left:748.50px;width:600px;text-align:center;top:104.15px;font-size:14px;line-height:14px;color:#1f2329;font-weight:400;"><span style="color:#1f2329">2 шт</span> <b style="color:#1450f0;font-size:15px">+2</b></div><div class="a t" style="left:748.50px;width:600px;text-align:center;top:127.15px;font-size:14px;line-height:14px;color:#1f2329;font-weight:400;"><span style="color:#8c8c8c">0 шт</span></div><div class="a t" style="left:748.50px;width:600px;text-align:center;top:149.15px;font-size:14px;line-height:14px;color:#1f2329;font-weight:400;"><span style="color:#1f2329">2 шт</span></div><div class="a t" style="left:748.50px;width:600px;text-align:center;top:171.15px;font-size:14px;line-height:14px;color:#1f2329;font-weight:400;"><span style="color:#1f2329">14 дн</span></div><div class="a" style="left:1130px;top:122px;width:107px;height:1px;background:#d6dbe0"></div><div class="a" style="left:1130px;top:144px;width:107px;height:1px;background:#d6dbe0"></div><div class="a" style="left:1130px;top:166px;width:107px;height:1px;background:#d6dbe0"></div><div class="a t" style="left:883.50px;width:600px;text-align:center;top:104.15px;font-size:14px;line-height:14px;color:#1f2329;font-weight:400;"><span style="color:#8c8c8c">0 шт</span></div><div class="a t" style="left:883.50px;width:600px;text-align:center;top:127.15px;font-size:14px;line-height:14px;color:#1f2329;font-weight:400;"><span style="color:#8c8c8c">0 шт</span></div><div class="a t" style="left:883.50px;width:600px;text-align:center;top:149.15px;font-size:14px;line-height:14px;color:#1f2329;font-weight:400;"><span style="color:#8c8c8c">0 шт</span></div><div class="a t" style="left:883.50px;width:600px;text-align:center;top:171.15px;font-size:14px;line-height:14px;color:#1f2329;font-weight:400;"><span style="color:#8c8c8c">0 дн</span></div><div class="a" style="left:1265px;top:122px;width:107px;height:1px;background:#d6dbe0"></div><div class="a" style="left:1265px;top:144px;width:107px;height:1px;background:#d6dbe0"></div><div class="a" style="left:1265px;top:166px;width:107px;height:1px;background:#d6dbe0"></div><div class="a t" style="left:1018.50px;width:600px;text-align:center;top:104.15px;font-size:14px;line-height:14px;color:#1f2329;font-weight:400;"><span style="color:#8c8c8c">0 шт</span></div><div class="a t" style="left:1018.50px;width:600px;text-align:center;top:127.15px;font-size:14px;line-height:14px;color:#1f2329;font-weight:400;"><span style="color:#8c8c8c">0 шт</span></div><div class="a t" style="left:1018.50px;width:600px;text-align:center;top:149.15px;font-size:14px;line-height:14px;color:#1f2329;font-weight:400;"><span style="color:#8c8c8c">0 шт</span></div><div class="a t" style="left:1018.50px;width:600px;text-align:center;top:171.15px;font-size:14px;line-height:14px;color:#1f2329;font-weight:400;"><span style="color:#8c8c8c">0 дн</span></div><div class="a" style="left:1400px;top:122px;width:107px;height:1px;background:#d6dbe0"></div><div class="a" style="left:1400px;top:144px;width:107px;height:1px;background:#d6dbe0"></div><div class="a" style="left:1400px;top:166px;width:107px;height:1px;background:#d6dbe0"></div><div class="a t" style="left:1153.50px;width:600px;text-align:center;top:104.15px;font-size:14px;line-height:14px;color:#1f2329;font-weight:400;"><span style="color:#1f2329">3 шт</span></div><div class="a t" style="left:1153.50px;width:600px;text-align:center;top:127.15px;font-size:14px;line-height:14px;color:#1f2329;font-weight:400;"><span style="color:#8c8c8c">0 шт</span></div><div class="a t" style="left:1153.50px;width:600px;text-align:center;top:149.15px;font-size:14px;line-height:14px;color:#1f2329;font-weight:400;"><span style="color:#8c8c8c">0 шт</span></div><div class="a t" style="left:1153.50px;width:600px;text-align:center;top:171.15px;font-size:14px;line-height:14px;color:#1f2329;font-weight:400;"><span style="color:#1f2329">999 дн</span></div><div class="a" style="left:1535px;top:122px;width:107px;height:1px;background:#d6dbe0"></div><div class="a" style="left:1535px;top:144px;width:107px;height:1px;background:#d6dbe0"></div><div class="a" style="left:1535px;top:166px;width:107px;height:1px;background:#d6dbe0"></div><div class="a t" style="left:1288.50px;width:600px;text-align:center;top:104.15px;font-size:14px;line-height:14px;color:#1f2329;font-weight:400;"><span style="color:#8c8c8c">0 шт</span></div><div class="a t" style="left:1288.50px;width:600px;text-align:center;top:127.15px;font-size:14px;line-height:14px;color:#1f2329;font-weight:400;"><span style="color:#8c8c8c">0 шт</span></div><div class="a t" style="left:1288.50px;width:600px;text-align:center;top:149.15px;font-size:14px;line-height:14px;color:#1f2329;font-weight:400;"><span style="color:#8c8c8c">0 шт</span></div><div class="a t" style="left:1288.50px;width:600px;text-align:center;top:171.15px;font-size:14px;line-height:14px;color:#1f2329;font-weight:400;"><span style="color:#8c8c8c">0 дн</span></div><div class="a" style="left:1670px;top:122px;width:107px;height:1px;background:#d6dbe0"></div><div class="a" style="left:1670px;top:144px;width:107px;height:1px;background:#d6dbe0"></div><div class="a" style="left:1670px;top:166px;width:107px;height:1px;background:#d6dbe0"></div><div class="a t" style="left:1423.50px;width:600px;text-align:center;top:104.15px;font-size:14px;line-height:14px;color:#1f2329;font-weight:400;"><span style="color:#8c8c8c">0 шт</span></div><div class="a t" style="left:1423.50px;width:600px;text-align:center;top:127.15px;font-size:14px;line-height:14px;color:#1f2329;font-weight:400;"><span style="color:#8c8c8c">0 шт</span></div><div class="a t" style="left:1423.50px;width:600px;text-align:center;top:149.15px;font-size:14px;line-height:14px;color:#1f2329;font-weight:400;"><span style="color:#8c8c8c">0 шт</span></div><div class="a t" style="left:1423.50px;width:600px;text-align:center;top:171.15px;font-size:14px;line-height:14px;color:#1f2329;font-weight:400;"><span style="color:#8c8c8c">0 дн</span></div><div class="a" style="left:0px;top:195px;width:428px;height:100px;background:#efefef"></div><div class="a" style="left:0px;top:195px;width:1790px;height:1px;background:#d3d9df"></div><div class="a" style="left:306px;top:198px;width:1px;height:94px;background:#d6dce2"></div><div class="a" style="left:428px;top:195px;width:1px;height:100px;background:#d0d6dc"></div><svg style="left:2px;top:198px;border-radius:4px" width="60" height="80" viewBox="0 0 60 80"><clipPath id="c2198"><rect width="60" height="80" rx="4"/></clipPath><g clip-path="url(#c2198)"><rect width="60" height="80" fill="#0b1330"/><ellipse cx="50" cy="6" rx="16" ry="9" fill="#2a5a98" opacity="0.6"/><ellipse cx="52" cy="62" rx="14" ry="20" fill="#18305e" opacity="0.5"/><ellipse cx="14" cy="32" rx="22" ry="9" fill="#3b2a2a" transform="rotate(12 14 32)"/><circle cx="7" cy="34" r="10" fill="#4a2418"/><circle cx="7" cy="34" r="6.5" fill="none" stroke="#c9521f" stroke-width="1.3" opacity="0.8"/><g transform="rotate(-30 33 42)"><rect x="4" y="33" width="58" height="18" rx="8" fill="#e4ecf3"/><path d="M10 38h48M10 42h48M10 46h48" stroke="#b8d0c8" stroke-width="0.5"/><rect x="4" y="33" width="9" height="18" rx="8" fill="#d5dde6"/><rect x="36" y="33" width="5" height="18" fill="#5aa6e4"/></g><text x="35" y="14" font-size="12" textLength="24" lengthAdjust="spacingAndGlyphs" fill="#c8e6ff" style="font-family:'Liberation Sans';font-weight:bold">ЕНКА</text><rect x="38" y="16" width="21" height="5" fill="#e5531a"/><path d="M18 64 L58 42" stroke="#99a" stroke-width="0.6"/><text x="37" y="58" font-size="8" textLength="20" lengthAdjust="spacingAndGlyphs" fill="#fff" style="font-family:'Liberation Sans';font-weight:bold">10см</text><text x="3" y="74" font-size="7" textLength="18" lengthAdjust="spacingAndGlyphs" fill="#f0c6a4" style="font-family:'Liberation Sans';font-weight:bold">РУЛОН</text><rect x="21" y="65" width="22" height="11" fill="#f05a14"/><text x="23" y="75" font-size="10" textLength="18" lengthAdjust="spacingAndGlyphs" fill="#fff" style="font-family:'Liberation Sans';font-weight:bold">10м</text></g></svg><div class="a" style="left:5px;top:201px;width:35px;height:22px;border-radius:4px;background:linear-gradient(90deg,#c80fa9,#3c0f70);color:#fff;font:17px/22px 'Liberation Sans';text-align:center;letter-spacing:-1px">WB</div><div class="a t" style="left:70.80px;top:199.00px;font-size:13.7px;line-height:13.7px;color:#2c3640;font-weight:700;">Средства для заживления</div><div class="a t" style="left:70.80px;top:215.00px;font-size:13.7px;line-height:13.7px;color:#2c3640;font-weight:700;">татуировок</div><div class="a t" style="left:70.80px;top:231.00px;font-size:13.7px;line-height:13.7px;color:#58626c;font-weight:400;">10M10M10CM</div><div class="a t" style="left:70.80px;top:247.00px;font-size:13.7px;line-height:13.7px;color:#58626c;font-weight:400;">SKU: 77141577</div><div class="a t" style="left:66.50px;width:600px;text-align:center;top:205.70px;font-size:14.3px;line-height:14.3px;color:#666;font-weight:400;">Остатки</div><div class="a t" style="left:66.50px;width:600px;text-align:center;top:227.90px;font-size:14.3px;line-height:14.3px;color:#666;font-weight:400;">В пути</div><div class="a t" style="left:66.50px;width:600px;text-align:center;top:249.90px;font-size:14.3px;line-height:14.3px;color:#666;font-weight:400;">Заказы за 14 дн.</div><div class="a t" style="left:66.50px;width:600px;text-align:center;top:271.90px;font-size:14.3px;line-height:14.3px;color:#666;font-weight:400;">Хватит на</div><div class="a" style="left:311px;top:223px;width:111px;height:1px;background:#d6dbe0"></div><div class="a" style="left:311px;top:245px;width:111px;height:1px;background:#d6dbe0"></div><div class="a" style="left:311px;top:267px;width:111px;height:1px;background:#d6dbe0"></div><div class="a" style="left:436px;top:223px;width:127px;height:1px;background:#d6dbe0"></div><div class="a" style="left:436px;top:245px;width:127px;height:1px;background:#d6dbe0"></div><div class="a" style="left:436px;top:267px;width:127px;height:1px;background:#d6dbe0"></div><div class="a t" style="left:199.50px;width:600px;text-align:center;top:205.15px;font-size:14px;line-height:14px;color:#1f2329;font-weight:400;"><span style="color:#1f2329">42 шт</span></div><div class="a t" style="left:199.50px;width:600px;text-align:center;top:228.15px;font-size:14px;line-height:14px;color:#1f2329;font-weight:400;"><span style="color:#8c8c8c">0 шт</span></div><div class="a t" style="left:199.50px;width:600px;text-align:center;top:250.15px;font-size:14px;line-height:14px;color:#1f2329;font-weight:400;"><span style="color:#1f2329">22 шт</span></div><div class="a t" style="left:199.50px;width:600px;text-align:center;top:272.15px;font-size:14px;line-height:14px;color:#1f2329;font-weight:400;"><span style="color:#1f2329">27 дн</span></div><div class="a" style="left:572px;top:200px;width:135px;height:91px;background:#ddeff3;border:1px solid #88c9d5;border-radius:6px"></div><div class="a" style="left:577px;top:223px;width:125px;height:1px;background:#d8d6d9"></div><div class="a" style="left:577px;top:245px;width:125px;height:1px;background:#d8d6d9"></div><div class="a" style="left:577px;top:267px;width:125px;height:1px;background:#d8d6d9"></div><div class="a t" style="left:339.50px;width:600px;text-align:center;top:205.15px;font-size:14px;line-height:14px;color:#1f2329;font-weight:400;"><span style="color:#1f2329">41 шт</span></div><div class="a t" style="left:339.50px;width:600px;text-align:center;top:228.15px;font-size:14px;line-height:14px;color:#1f2329;font-weight:400;"><span style="color:#8c8c8c">0 шт</span></div><div class="a t" style="left:339.50px;width:600px;text-align:center;top:250.15px;font-size:14px;line-height:14px;color:#1f2329;font-weight:400;"><span style="color:#1f2329">20 шт</span></div><div class="a t" style="left:339.50px;width:600px;text-align:center;top:272.15px;font-size:14px;line-height:14px;color:#1f2329;font-weight:400;"><span style="color:#1f2329">29 дн</span></div><div class="a" style="left:725px;top:222px;width:107px;height:1px;background:#d6dbe0"></div><div class="a" style="left:725px;top:244px;width:107px;height:1px;background:#d6dbe0"></div><div class="a" style="left:725px;top:266px;width:107px;height:1px;background:#d6dbe0"></div><div class="a t" style="left:478.50px;width:600px;text-align:center;top:204.15px;font-size:14px;line-height:14px;color:#1f2329;font-weight:400;"><span style="color:#1f2329">2 шт</span> <b style="color:#1450f0;font-size:15px">+12</b></div><div class="a t" style="left:478.50px;width:600px;text-align:center;top:227.15px;font-size:14px;line-height:14px;color:#1f2329;font-weight:400;"><span style="color:#8c8c8c">0 шт</span></div><div class="a t" style="left:478.50px;width:600px;text-align:center;top:249.15px;font-size:14px;line-height:14px;color:#1f2329;font-weight:400;"><span style="color:#1f2329">8 шт</span></div><div class="a t" style="left:478.50px;width:600px;text-align:center;top:271.15px;font-size:14px;line-height:14px;color:#1f2329;font-weight:400;"><span style="color:#1f2329">4 дн</span></div><div class="a" style="left:860px;top:222px;width:107px;height:1px;background:#d6dbe0"></div><div class="a" style="left:860px;top:244px;width:107px;height:1px;background:#d6dbe0"></div><div class="a" style="left:860px;top:266px;width:107px;height:1px;background:#d6dbe0"></div><div class="a t" style="left:613.50px;width:600px;text-align:center;top:204.15px;font-size:14px;line-height:14px;color:#1f2329;font-weight:400;"><span style="color:#8c8c8c">0 шт</span></div><div class="a t" style="left:613.50px;width:600px;text-align:center;top:227.15px;font-size:14px;line-height:14px;color:#1f2329;font-weight:400;"><span style="color:#8c8c8c">0 шт</span></div><div class="a t" style="left:613.50px;width:600px;text-align:center;top:249.15px;font-size:14px;line-height:14px;color:#1f2329;font-weight:400;"><span style="color:#8c8c8c">0 шт</span></div><div class="a t" style="left:613.50px;width:600px;text-align:center;top:271.15px;font-size:14px;line-height:14px;color:#1f2329;font-weight:400;"><span style="color:#8c8c8c">0 дн</span></div><div class="a" style="left:995px;top:222px;width:107px;height:1px;background:#d6dbe0"></div><div class="a" style="left:995px;top:244px;width:107px;height:1px;background:#d6dbe0"></div><div class="a" style="left:995px;top:266px;width:107px;height:1px;background:#d6dbe0"></div><div class="a t" style="left:748.50px;width:600px;text-align:center;top:204.15px;font-size:14px;line-height:14px;color:#1f2329;font-weight:400;"><span style="color:#1f2329">1 шт</span> <b style="color:#1450f0;font-size:15px">+12</b></div><div class="a t" style="left:748.50px;width:600px;text-align:center;top:227.15px;font-size:14px;line-height:14px;color:#1f2329;font-weight:400;"><span style="color:#8c8c8c">0 шт</span></div><div class="a t" style="left:748.50px;width:600px;text-align:center;top:249.15px;font-size:14px;line-height:14px;color:#1f2329;font-weight:400;"><span style="color:#1f2329">7 шт</span></div><div class="a t" style="left:748.50px;width:600px;text-align:center;top:271.15px;font-size:14px;line-height:14px;color:#1f2329;font-weight:400;"><span style="color:#1f2329">2 дн</span></div><div class="a" style="left:1130px;top:222px;width:107px;height:1px;background:#d6dbe0"></div><div class="a" style="left:1130px;top:244px;width:107px;height:1px;background:#d6dbe0"></div><div class="a" style="left:1130px;top:266px;width:107px;height:1px;background:#d6dbe0"></div><div class="a t" style="left:883.50px;width:600px;text-align:center;top:204.15px;font-size:14px;line-height:14px;color:#1f2329;font-weight:400;"><span style="color:#8c8c8c">0 шт</span></div><div class="a t" style="left:883.50px;width:600px;text-align:center;top:227.15px;font-size:14px;line-height:14px;color:#1f2329;font-weight:400;"><span style="color:#8c8c8c">0 шт</span></div><div class="a t" style="left:883.50px;width:600px;text-align:center;top:249.15px;font-size:14px;line-height:14px;color:#1f2329;font-weight:400;"><span style="color:#8c8c8c">0 шт</span></div><div class="a t" style="left:883.50px;width:600px;text-align:center;top:271.15px;font-size:14px;line-height:14px;color:#1f2329;font-weight:400;"><span style="color:#8c8c8c">0 дн</span></div><div class="a" style="left:1265px;top:222px;width:107px;height:1px;background:#d6dbe0"></div><div class="a" style="left:1265px;top:244px;width:107px;height:1px;background:#d6dbe0"></div><div class="a" style="left:1265px;top:266px;width:107px;height:1px;background:#d6dbe0"></div><div class="a t" style="left:1018.50px;width:600px;text-align:center;top:204.15px;font-size:14px;line-height:14px;color:#1f2329;font-weight:400;"><span style="color:#8c8c8c">0 шт</span></div><div class="a t" style="left:1018.50px;width:600px;text-align:center;top:227.15px;font-size:14px;line-height:14px;color:#1f2329;font-weight:400;"><span style="color:#8c8c8c">0 шт</span></div><div class="a t" style="left:1018.50px;width:600px;text-align:center;top:249.15px;font-size:14px;line-height:14px;color:#1f2329;font-weight:400;"><span style="color:#8c8c8c">0 шт</span></div><div class="a t" style="left:1018.50px;width:600px;text-align:center;top:271.15px;font-size:14px;line-height:14px;color:#1f2329;font-weight:400;"><span style="color:#8c8c8c">0 дн</span></div><div class="a" style="left:1400px;top:222px;width:107px;height:1px;background:#d6dbe0"></div><div class="a" style="left:1400px;top:244px;width:107px;height:1px;background:#d6dbe0"></div><div class="a" style="left:1400px;top:266px;width:107px;height:1px;background:#d6dbe0"></div><div class="a t" style="left:1153.50px;width:600px;text-align:center;top:204.15px;font-size:14px;line-height:14px;color:#1f2329;font-weight:400;"><span style="color:#1f2329">5 шт</span> <b style="color:#1450f0;font-size:15px">+2</b></div><div class="a t" style="left:1153.50px;width:600px;text-align:center;top:227.15px;font-size:14px;line-height:14px;color:#1f2329;font-weight:400;"><span style="color:#8c8c8c">0 шт</span></div><div class="a t" style="left:1153.50px;width:600px;text-align:center;top:249.15px;font-size:14px;line-height:14px;color:#1f2329;font-weight:400;"><span style="color:#1f2329">4 шт</span></div><div class="a t" style="left:1153.50px;width:600px;text-align:center;top:271.15px;font-size:14px;line-height:14px;color:#1f2329;font-weight:400;"><span style="color:#1f2329">18 дн</span></div><div class="a" style="left:1535px;top:222px;width:107px;height:1px;background:#d6dbe0"></div><div class="a" style="left:1535px;top:244px;width:107px;height:1px;background:#d6dbe0"></div><div class="a" style="left:1535px;top:266px;width:107px;height:1px;background:#d6dbe0"></div><div class="a t" style="left:1288.50px;width:600px;text-align:center;top:204.15px;font-size:14px;line-height:14px;color:#1f2329;font-weight:400;"><span style="color:#8c8c8c">0 шт</span></div><div class="a t" style="left:1288.50px;width:600px;text-align:center;top:227.15px;font-size:14px;line-height:14px;color:#1f2329;font-weight:400;"><span style="color:#8c8c8c">0 шт</span></div><div class="a t" style="left:1288.50px;width:600px;text-align:center;top:249.15px;font-size:14px;line-height:14px;color:#1f2329;font-weight:400;"><span style="color:#8c8c8c">0 шт</span></div><div class="a t" style="left:1288.50px;width:600px;text-align:center;top:271.15px;font-size:14px;line-height:14px;color:#1f2329;font-weight:400;"><span style="color:#8c8c8c">0 дн</span></div><div class="a" style="left:1670px;top:222px;width:107px;height:1px;background:#d6dbe0"></div><div class="a" style="left:1670px;top:244px;width:107px;height:1px;background:#d6dbe0"></div><div class="a" style="left:1670px;top:266px;width:107px;height:1px;background:#d6dbe0"></div><div class="a t" style="left:1423.50px;width:600px;text-align:center;top:204.15px;font-size:14px;line-height:14px;color:#1f2329;font-weight:400;"><span style="color:#8c8c8c">0 шт</span></div><div class="a t" style="left:1423.50px;width:600px;text-align:center;top:227.15px;font-size:14px;line-height:14px;color:#1f2329;font-weight:400;"><span style="color:#8c8c8c">0 шт</span></div><div class="a t" style="left:1423.50px;width:600px;text-align:center;top:249.15px;font-size:14px;line-height:14px;color:#1f2329;font-weight:400;"><span style="color:#8c8c8c">0 шт</span></div><div class="a t" style="left:1423.50px;width:600px;text-align:center;top:271.15px;font-size:14px;line-height:14px;color:#1f2329;font-weight:400;"><span style="color:#8c8c8c">0 дн</span></div><div class="a" style="left:0px;top:295px;width:428px;height:100px;background:#efefef"></div><div class="a" style="left:0px;top:295px;width:1790px;height:1px;background:#d3d9df"></div><div class="a" style="left:306px;top:298px;width:1px;height:94px;background:#d6dce2"></div><div class="a" style="left:428px;top:295px;width:1px;height:100px;background:#d0d6dc"></div><svg style="left:2px;top:298px;border-radius:4px" width="60" height="80" viewBox="0 0 60 80"><clipPath id="c2298"><rect width="60" height="80" rx="4"/></clipPath><g clip-path="url(#c2298)"><rect width="60" height="80" fill="#0b1330"/><ellipse cx="50" cy="6" rx="16" ry="9" fill="#2a5a98" opacity="0.6"/><ellipse cx="52" cy="62" rx="14" ry="20" fill="#18305e" opacity="0.5"/><ellipse cx="14" cy="32" rx="22" ry="9" fill="#3b2a2a" transform="rotate(12 14 32)"/><circle cx="7" cy="34" r="10" fill="#4a2418"/><circle cx="7" cy="34" r="6.5" fill="none" stroke="#c9521f" stroke-width="1.3" opacity="0.8"/><g transform="rotate(-30 33 42)"><rect x="4" y="33" width="58" height="18" rx="8" fill="#e4ecf3"/><path d="M10 38h48M10 42h48M10 46h48" stroke="#b8d0c8" stroke-width="0.5"/><rect x="4" y="33" width="9" height="18" rx="8" fill="#d5dde6"/><rect x="36" y="33" width="5" height="18" fill="#5aa6e4"/></g><text x="35" y="14" font-size="12" textLength="24" lengthAdjust="spacingAndGlyphs" fill="#c8e6ff" style="font-family:'Liberation Sans';font-weight:bold">ЕНКА</text><rect x="38" y="16" width="21" height="5" fill="#e5531a"/><path d="M18 64 L58 42" stroke="#99a" stroke-width="0.6"/><text x="37" y="58" font-size="8" textLength="20" lengthAdjust="spacingAndGlyphs" fill="#fff" style="font-family:'Liberation Sans';font-weight:bold">15см</text><text x="3" y="74" font-size="7" textLength="18" lengthAdjust="spacingAndGlyphs" fill="#f0c6a4" style="font-family:'Liberation Sans';font-weight:bold">РУЛОН</text><rect x="21" y="65" width="22" height="11" fill="#f05a14"/><text x="23" y="75" font-size="10" textLength="18" lengthAdjust="spacingAndGlyphs" fill="#fff" style="font-family:'Liberation Sans';font-weight:bold">10м</text></g></svg><div class="a" style="left:5px;top:301px;width:35px;height:22px;border-radius:4px;background:linear-gradient(90deg,#c80fa9,#3c0f70);color:#fff;font:17px/22px 'Liberation Sans';text-align:center;letter-spacing:-1px">WB</div><div class="a t" style="left:70.80px;top:299.00px;font-size:13.7px;line-height:13.7px;color:#2c3640;font-weight:700;">Средства для заживления</div><div class="a t" style="left:70.80px;top:315.00px;font-size:13.7px;line-height:13.7px;color:#2c3640;font-weight:700;">татуировок</div><div class="a t" style="left:70.80px;top:331.00px;font-size:13.7px;line-height:13.7px;color:#58626c;font-weight:400;">10M10M15CM</div><div class="a t" style="left:70.80px;top:347.00px;font-size:13.7px;line-height:13.7px;color:#58626c;font-weight:400;">SKU: 77141578</div><div class="a t" style="left:66.50px;width:600px;text-align:center;top:305.70px;font-size:14.3px;line-height:14.3px;color:#666;font-weight:400;">Остатки</div><div class="a t" style="left:66.50px;width:600px;text-align:center;top:327.90px;font-size:14.3px;line-height:14.3px;color:#666;font-weight:400;">В пути</div><div class="a t" style="left:66.50px;width:600px;text-align:center;top:349.90px;font-size:14.3px;line-height:14.3px;color:#666;font-weight:400;">Заказы за 14 дн.</div><div class="a t" style="left:66.50px;width:600px;text-align:center;top:371.90px;font-size:14.3px;line-height:14.3px;color:#666;font-weight:400;">Хватит на</div><div class="a" style="left:311px;top:323px;width:111px;height:1px;background:#d6dbe0"></div><div class="a" style="left:311px;top:345px;width:111px;height:1px;background:#d6dbe0"></div><div class="a" style="left:311px;top:367px;width:111px;height:1px;background:#d6dbe0"></div><div class="a" style="left:436px;top:323px;width:127px;height:1px;background:#d6dbe0"></div><div class="a" style="left:436px;top:345px;width:127px;height:1px;background:#d6dbe0"></div><div class="a" style="left:436px;top:367px;width:127px;height:1px;background:#d6dbe0"></div><div class="a t" style="left:199.50px;width:600px;text-align:center;top:305.15px;font-size:14px;line-height:14px;color:#1f2329;font-weight:400;"><span style="color:#1f2329">73 шт</span></div><div class="a t" style="left:199.50px;width:600px;text-align:center;top:328.15px;font-size:14px;line-height:14px;color:#1f2329;font-weight:400;"><span style="color:#1f2329">15 шт</span></div><div class="a t" style="left:199.50px;width:600px;text-align:center;top:350.15px;font-size:14px;line-height:14px;color:#1f2329;font-weight:400;"><span style="color:#1f2329">5 шт</span></div><div class="a t" style="left:199.50px;width:600px;text-align:center;top:372.15px;font-size:14px;line-height:14px;color:#1f2329;font-weight:400;"><span style="color:#1f2329">246 дн</span></div><div class="a" style="left:572px;top:300px;width:135px;height:91px;background:#ddeff3;border:1px solid #88c9d5;border-radius:6px"></div><div class="a" style="left:577px;top:323px;width:125px;height:1px;background:#d8d6d9"></div><div class="a" style="left:577px;top:345px;width:125px;height:1px;background:#d8d6d9"></div><div class="a" style="left:577px;top:367px;width:125px;height:1px;background:#d8d6d9"></div><div class="a t" style="left:339.50px;width:600px;text-align:center;top:305.15px;font-size:14px;line-height:14px;color:#1f2329;font-weight:400;"><span style="color:#1f2329">20 шт</span></div><div class="a t" style="left:339.50px;width:600px;text-align:center;top:328.15px;font-size:14px;line-height:14px;color:#1f2329;font-weight:400;"><span style="color:#1f2329">5 шт</span></div><div class="a t" style="left:339.50px;width:600px;text-align:center;top:350.15px;font-size:14px;line-height:14px;color:#1f2329;font-weight:400;"><span style="color:#1f2329">5 шт</span></div><div class="a t" style="left:339.50px;width:600px;text-align:center;top:372.15px;font-size:14px;line-height:14px;color:#1f2329;font-weight:400;"><span style="color:#1f2329">70 дн</span></div><div class="a" style="left:725px;top:322px;width:107px;height:1px;background:#d6dbe0"></div><div class="a" style="left:725px;top:344px;width:107px;height:1px;background:#d6dbe0"></div><div class="a" style="left:725px;top:366px;width:107px;height:1px;background:#d6dbe0"></div><div class="a t" style="left:478.50px;width:600px;text-align:center;top:304.15px;font-size:14px;line-height:14px;color:#1f2329;font-weight:400;"><span style="color:#1f2329">8 шт</span></div><div class="a t" style="left:478.50px;width:600px;text-align:center;top:327.15px;font-size:14px;line-height:14px;color:#1f2329;font-weight:400;"><span style="color:#8c8c8c">0 шт</span></div><div class="a t" style="left:478.50px;width:600px;text-align:center;top:349.15px;font-size:14px;line-height:14px;color:#1f2329;font-weight:400;"><span style="color:#1f2329">2 шт</span></div><div class="a t" style="left:478.50px;width:600px;text-align:center;top:371.15px;font-size:14px;line-height:14px;color:#1f2329;font-weight:400;"><span style="color:#1f2329">56 дн</span></div><div class="a" style="left:860px;top:322px;width:107px;height:1px;background:#d6dbe0"></div><div class="a" style="left:860px;top:344px;width:107px;height:1px;background:#d6dbe0"></div><div class="a" style="left:860px;top:366px;width:107px;height:1px;background:#d6dbe0"></div><div class="a t" style="left:613.50px;width:600px;text-align:center;top:304.15px;font-size:14px;line-height:14px;color:#1f2329;font-weight:400;"><span style="color:#8c8c8c">0 шт</span></div><div class="a t" style="left:613.50px;width:600px;text-align:center;top:327.15px;font-size:14px;line-height:14px;color:#1f2329;font-weight:400;"><span style="color:#8c8c8c">0 шт</span></div><div class="a t" style="left:613.50px;width:600px;text-align:center;top:349.15px;font-size:14px;line-height:14px;color:#1f2329;font-weight:400;"><span style="color:#8c8c8c">0 шт</span></div><div class="a t" style="left:613.50px;width:600px;text-align:center;top:371.15px;font-size:14px;line-height:14px;color:#1f2329;font-weight:400;"><span style="color:#8c8c8c">0 дн</span></div><div class="a" style="left:995px;top:322px;width:107px;height:1px;background:#d6dbe0"></div><div class="a" style="left:995px;top:344px;width:107px;height:1px;background:#d6dbe0"></div><div class="a" style="left:995px;top:366px;width:107px;height:1px;background:#d6dbe0"></div><div class="a t" style="left:748.50px;width:600px;text-align:center;top:304.15px;font-size:14px;line-height:14px;color:#1f2329;font-weight:400;"><span style="color:#8c8c8c">0 шт</span> <b style="color:#1450f0;font-size:15px">+2</b></div><div class="a t" style="left:748.50px;width:600px;text-align:center;top:327.15px;font-size:14px;line-height:14px;color:#1f2329;font-weight:400;"><span style="color:#8c8c8c">0 шт</span></div><div class="a t" style="left:748.50px;width:600px;text-align:center;top:349.15px;font-size:14px;line-height:14px;color:#1f2329;font-weight:400;"><span style="color:#1f2329">1 шт</span></div><div class="a t" style="left:748.50px;width:600px;text-align:center;top:371.15px;font-size:14px;line-height:14px;color:#1f2329;font-weight:400;"><span style="color:#8c8c8c">0 дн</span></div><div class="a" style="left:1130px;top:322px;width:107px;height:1px;background:#d6dbe0"></div><div class="a" style="left:1130px;top:344px;width:107px;height:1px;background:#d6dbe0"></div><div class="a" style="left:1130px;top:366px;width:107px;height:1px;background:#d6dbe0"></div><div class="a t" style="left:883.50px;width:600px;text-align:center;top:304.15px;font-size:14px;line-height:14px;color:#1f2329;font-weight:400;"><span style="color:#8c8c8c">0 шт</span></div><div class="a t" style="left:883.50px;width:600px;text-align:center;top:327.15px;font-size:14px;line-height:14px;color:#1f2329;font-weight:400;"><span style="color:#8c8c8c">0 шт</span></div><div class="a t" style="left:883.50px;width:600px;text-align:center;top:349.15px;font-size:14px;line-height:14px;color:#1f2329;font-weight:400;"><span style="color:#8c8c8c">0 шт</span></div><div class="a t" style="left:883.50px;width:600px;text-align:center;top:371.15px;font-size:14px;line-height:14px;color:#1f2329;font-weight:400;"><span style="color:#8c8c8c">0 дн</span></div><div class="a" style="left:1265px;top:322px;width:107px;height:1px;background:#d6dbe0"></div><div class="a" style="left:1265px;top:344px;width:107px;height:1px;background:#d6dbe0"></div><div class="a" style="left:1265px;top:366px;width:107px;height:1px;background:#d6dbe0"></div><div class="a t" style="left:1018.50px;width:600px;text-align:center;top:304.15px;font-size:14px;line-height:14px;color:#1f2329;font-weight:400;"><span style="color:#8c8c8c">0 шт</span></div><div class="a t" style="left:1018.50px;width:600px;text-align:center;top:327.15px;font-size:14px;line-height:14px;color:#1f2329;font-weight:400;"><span style="color:#8c8c8c">0 шт</span></div><div class="a t" style="left:1018.50px;width:600px;text-align:center;top:349.15px;font-size:14px;line-height:14px;color:#1f2329;font-weight:400;"><span style="color:#8c8c8c">0 шт</span></div><div class="a t" style="left:1018.50px;width:600px;text-align:center;top:371.15px;font-size:14px;line-height:14px;color:#1f2329;font-weight:400;"><span style="color:#8c8c8c">0 дн</span></div><div class="a" style="left:1400px;top:322px;width:107px;height:1px;background:#d6dbe0"></div><div class="a" style="left:1400px;top:344px;width:107px;height:1px;background:#d6dbe0"></div><div class="a" style="left:1400px;top:366px;width:107px;height:1px;background:#d6dbe0"></div><div class="a t" style="left:1153.50px;width:600px;text-align:center;top:304.15px;font-size:14px;line-height:14px;color:#1f2329;font-weight:400;"><span style="color:#1f2329">4 шт</span></div><div class="a t" style="left:1153.50px;width:600px;text-align:center;top:327.15px;font-size:14px;line-height:14px;color:#1f2329;font-weight:400;"><span style="color:#1f2329">5 шт</span></div><div class="a t" style="left:1153.50px;width:600px;text-align:center;top:349.15px;font-size:14px;line-height:14px;color:#1f2329;font-weight:400;"><span style="color:#8c8c8c">0 шт</span></div><div class="a t" style="left:1153.50px;width:600px;text-align:center;top:371.15px;font-size:14px;line-height:14px;color:#1f2329;font-weight:400;"><span style="color:#1f2329">999 дн</span></div><div class="a" style="left:1535px;top:322px;width:107px;height:1px;background:#d6dbe0"></div><div class="a" style="left:1535px;top:344px;width:107px;height:1px;background:#d6dbe0"></div><div class="a" style="left:1535px;top:366px;width:107px;height:1px;background:#d6dbe0"></div><div class="a t" style="left:1288.50px;width:600px;text-align:center;top:304.15px;font-size:14px;line-height:14px;color:#1f2329;font-weight:400;"><span style="color:#8c8c8c">0 шт</span></div><div class="a t" style="left:1288.50px;width:600px;text-align:center;top:327.15px;font-size:14px;line-height:14px;color:#1f2329;font-weight:400;"><span style="color:#8c8c8c">0 шт</span></div><div class="a t" style="left:1288.50px;width:600px;text-align:center;top:349.15px;font-size:14px;line-height:14px;color:#1f2329;font-weight:400;"><span style="color:#8c8c8c">0 шт</span></div><div class="a t" style="left:1288.50px;width:600px;text-align:center;top:371.15px;font-size:14px;line-height:14px;color:#1f2329;font-weight:400;"><span style="color:#8c8c8c">0 дн</span></div><div class="a" style="left:1670px;top:322px;width:107px;height:1px;background:#d6dbe0"></div><div class="a" style="left:1670px;top:344px;width:107px;height:1px;background:#d6dbe0"></div><div class="a" style="left:1670px;top:366px;width:107px;height:1px;background:#d6dbe0"></div><div class="a t" style="left:1423.50px;width:600px;text-align:center;top:304.15px;font-size:14px;line-height:14px;color:#1f2329;font-weight:400;"><span style="color:#8c8c8c">0 шт</span></div><div class="a t" style="left:1423.50px;width:600px;text-align:center;top:327.15px;font-size:14px;line-height:14px;color:#1f2329;font-weight:400;"><span style="color:#8c8c8c">0 шт</span></div><div class="a t" style="left:1423.50px;width:600px;text-align:center;top:349.15px;font-size:14px;line-height:14px;color:#1f2329;font-weight:400;"><span style="color:#8c8c8c">0 шт</span></div><div class="a t" style="left:1423.50px;width:600px;text-align:center;top:371.15px;font-size:14px;line-height:14px;color:#1f2329;font-weight:400;"><span style="color:#8c8c8c">0 дн</span></div><div class="a" style="left:0px;top:395px;width:428px;height:100px;background:#efefef"></div><div class="a" style="left:0px;top:395px;width:1790px;height:1px;background:#d3d9df"></div><div class="a" style="left:306px;top:398px;width:1px;height:94px;background:#d6dce2"></div><div class="a" style="left:428px;top:395px;width:1px;height:100px;background:#d0d6dc"></div><svg style="left:2px;top:398px;border-radius:4px" width="60" height="80" viewBox="0 0 60 80"><clipPath id="c2398"><rect width="60" height="80" rx="4"/></clipPath><g clip-path="url(#c2398)"><rect width="60" height="80" fill="#0b1330"/><ellipse cx="50" cy="6" rx="16" ry="9" fill="#2a5a98" opacity="0.6"/><ellipse cx="52" cy="62" rx="14" ry="20" fill="#18305e" opacity="0.5"/><ellipse cx="14" cy="32" rx="22" ry="9" fill="#3b2a2a" transform="rotate(12 14 32)"/><circle cx="7" cy="34" r="10" fill="#4a2418"/><circle cx="7" cy="34" r="6.5" fill="none" stroke="#c9521f" stroke-width="1.3" opacity="0.8"/><g transform="rotate(-30 33 42)"><rect x="4" y="33" width="58" height="18" rx="8" fill="#e4ecf3"/><path d="M10 38h48M10 42h48M10 46h48" stroke="#b8d0c8" stroke-width="0.5"/><rect x="4" y="33" width="9" height="18" rx="8" fill="#d5dde6"/><rect x="36" y="33" width="5" height="18" fill="#5aa6e4"/></g><text x="35" y="14" font-size="12" textLength="24" lengthAdjust="spacingAndGlyphs" fill="#c8e6ff" style="font-family:'Liberation Sans';font-weight:bold">ЕНКА</text><rect x="38" y="16" width="21" height="5" fill="#e5531a"/><path d="M18 64 L58 42" stroke="#99a" stroke-width="0.6"/><text x="37" y="58" font-size="8" textLength="20" lengthAdjust="spacingAndGlyphs" fill="#fff" style="font-family:'Liberation Sans';font-weight:bold">20см</text><text x="3" y="74" font-size="7" textLength="18" lengthAdjust="spacingAndGlyphs" fill="#f0c6a4" style="font-family:'Liberation Sans';font-weight:bold">РУЛОН</text><rect x="21" y="65" width="22" height="11" fill="#f05a14"/><text x="23" y="75" font-size="10" textLength="18" lengthAdjust="spacingAndGlyphs" fill="#fff" style="font-family:'Liberation Sans';font-weight:bold">10м</text></g></svg><div class="a" style="left:5px;top:401px;width:35px;height:22px;border-radius:4px;background:linear-gradient(90deg,#c80fa9,#3c0f70);color:#fff;font:17px/22px 'Liberation Sans';text-align:center;letter-spacing:-1px">WB</div><div class="a t" style="left:70.80px;top:399.00px;font-size:13.7px;line-height:13.7px;color:#2c3640;font-weight:700;">Средства для заживления</div><div class="a t" style="left:70.80px;top:415.00px;font-size:13.7px;line-height:13.7px;color:#2c3640;font-weight:700;">татуировок</div><div class="a t" style="left:70.80px;top:431.00px;font-size:13.7px;line-height:13.7px;color:#58626c;font-weight:400;">10M10M20CM</div><div class="a t" style="left:70.80px;top:447.00px;font-size:13.7px;line-height:13.7px;color:#58626c;font-weight:400;">SKU: 77141579</div><div class="a t" style="left:66.50px;width:600px;text-align:center;top:405.70px;font-size:14.3px;line-height:14.3px;color:#666;font-weight:400;">Остатки</div><div class="a t" style="left:66.50px;width:600px;text-align:center;top:427.90px;font-size:14.3px;line-height:14.3px;color:#666;font-weight:400;">В пути</div><div class="a t" style="left:66.50px;width:600px;text-align:center;top:449.90px;font-size:14.3px;line-height:14.3px;color:#666;font-weight:400;">Заказы за 14 дн.</div><div class="a t" style="left:66.50px;width:600px;text-align:center;top:471.90px;font-size:14.3px;line-height:14.3px;color:#666;font-weight:400;">Хватит на</div><div class="a" style="left:311px;top:423px;width:111px;height:1px;background:#d6dbe0"></div><div class="a" style="left:311px;top:445px;width:111px;height:1px;background:#d6dbe0"></div><div class="a" style="left:311px;top:467px;width:111px;height:1px;background:#d6dbe0"></div><div class="a" style="left:436px;top:423px;width:127px;height:1px;background:#d6dbe0"></div><div class="a" style="left:436px;top:445px;width:127px;height:1px;background:#d6dbe0"></div><div class="a" style="left:436px;top:467px;width:127px;height:1px;background:#d6dbe0"></div><div class="a t" style="left:199.50px;width:600px;text-align:center;top:405.15px;font-size:14px;line-height:14px;color:#1f2329;font-weight:400;"><span style="color:#1f2329">42 шт</span></div><div class="a t" style="left:199.50px;width:600px;text-align:center;top:428.15px;font-size:14px;line-height:14px;color:#1f2329;font-weight:400;"><span style="color:#1f2329">1 шт</span></div><div class="a t" style="left:199.50px;width:600px;text-align:center;top:450.15px;font-size:14px;line-height:14px;color:#1f2329;font-weight:400;"><span style="color:#1f2329">8 шт</span></div><div class="a t" style="left:199.50px;width:600px;text-align:center;top:472.15px;font-size:14px;line-height:14px;color:#1f2329;font-weight:400;"><span style="color:#1f2329">75 дн</span></div><div class="a" style="left:572px;top:400px;width:135px;height:91px;background:#ddeff3;border:1px solid #88c9d5;border-radius:6px"></div><div class="a" style="left:577px;top:423px;width:125px;height:1px;background:#d8d6d9"></div><div class="a" style="left:577px;top:445px;width:125px;height:1px;background:#d8d6d9"></div><div class="a" style="left:577px;top:467px;width:125px;height:1px;background:#d8d6d9"></div><div class="a t" style="left:339.50px;width:600px;text-align:center;top:405.15px;font-size:14px;line-height:14px;color:#1f2329;font-weight:400;"><span style="color:#1f2329">12 шт</span></div><div class="a t" style="left:339.50px;width:600px;text-align:center;top:428.15px;font-size:14px;line-height:14px;color:#1f2329;font-weight:400;"><span style="color:#1f2329">1 шт</span></div><div class="a t" style="left:339.50px;width:600px;text-align:center;top:450.15px;font-size:14px;line-height:14px;color:#1f2329;font-weight:400;"><span style="color:#1f2329">5 шт</span></div><div class="a t" style="left:339.50px;width:600px;text-align:center;top:472.15px;font-size:14px;line-height:14px;color:#1f2329;font-weight:400;"><span style="color:#1f2329">36 дн</span></div><div class="a" style="left:725px;top:422px;width:107px;height:1px;background:#d6dbe0"></div><div class="a" style="left:725px;top:444px;width:107px;height:1px;background:#d6dbe0"></div><div class="a" style="left:725px;top:466px;width:107px;height:1px;background:#d6dbe0"></div><div class="a t" style="left:478.50px;width:600px;text-align:center;top:404.15px;font-size:14px;line-height:14px;color:#1f2329;font-weight:400;"><span style="color:#8c8c8c">0 шт</span> <b style="color:#1450f0;font-size:15px">+6</b></div><div class="a t" style="left:478.50px;width:600px;text-align:center;top:427.15px;font-size:14px;line-height:14px;color:#1f2329;font-weight:400;"><span style="color:#8c8c8c">0 шт</span></div><div class="a t" style="left:478.50px;width:600px;text-align:center;top:449.15px;font-size:14px;line-height:14px;color:#1f2329;font-weight:400;"><span style="color:#1f2329">3 шт</span></div><div class="a t" style="left:478.50px;width:600px;text-align:center;top:471.15px;font-size:14px;line-height:14px;color:#1f2329;font-weight:400;"><span style="color:#8c8c8c">0 дн</span></div><div class="a" style="left:860px;top:422px;width:107px;height:1px;background:#d6dbe0"></div><div class="a" style="left:860px;top:444px;width:107px;height:1px;background:#d6dbe0"></div><div class="a" style="left:860px;top:466px;width:107px;height:1px;background:#d6dbe0"></div><div class="a t" style="left:613.50px;width:600px;text-align:center;top:404.15px;font-size:14px;line-height:14px;color:#1f2329;font-weight:400;"><span style="color:#8c8c8c">0 шт</span></div><div class="a t" style="left:613.50px;width:600px;text-align:center;top:427.15px;font-size:14px;line-height:14px;color:#1f2329;font-weight:400;"><span style="color:#8c8c8c">0 шт</span></div><div class="a t" style="left:613.50px;width:600px;text-align:center;top:449.15px;font-size:14px;line-height:14px;color:#1f2329;font-weight:400;"><span style="color:#8c8c8c">0 шт</span></div><div class="a t" style="left:613.50px;width:600px;text-align:center;top:471.15px;font-size:14px;line-height:14px;color:#1f2329;font-weight:400;"><span style="color:#8c8c8c">0 дн</span></div><div class="a" style="left:995px;top:422px;width:107px;height:1px;background:#d6dbe0"></div><div class="a" style="left:995px;top:444px;width:107px;height:1px;background:#d6dbe0"></div><div class="a" style="left:995px;top:466px;width:107px;height:1px;background:#d6dbe0"></div><div class="a t" style="left:748.50px;width:600px;text-align:center;top:404.15px;font-size:14px;line-height:14px;color:#1f2329;font-weight:400;"><span style="color:#1f2329">2 шт</span></div><div class="a t" style="left:748.50px;width:600px;text-align:center;top:427.15px;font-size:14px;line-height:14px;color:#1f2329;font-weight:400;"><span style="color:#8c8c8c">0 шт</span></div><div class="a t" style="left:748.50px;width:600px;text-align:center;top:449.15px;font-size:14px;line-height:14px;color:#1f2329;font-weight:400;"><span style="color:#8c8c8c">0 шт</span></div><div class="a t" style="left:748.50px;width:600px;text-align:center;top:471.15px;font-size:14px;line-height:14px;color:#1f2329;font-weight:400;"><span style="color:#1f2329">999 дн</span></div><div class="a" style="left:1130px;top:422px;width:107px;height:1px;background:#d6dbe0"></div><div class="a" style="left:1130px;top:444px;width:107px;height:1px;background:#d6dbe0"></div><div class="a" style="left:1130px;top:466px;width:107px;height:1px;background:#d6dbe0"></div><div class="a t" style="left:883.50px;width:600px;text-align:center;top:404.15px;font-size:14px;line-height:14px;color:#1f2329;font-weight:400;"><span style="color:#8c8c8c">0 шт</span></div><div class="a t" style="left:883.50px;width:600px;text-align:center;top:427.15px;font-size:14px;line-height:14px;color:#1f2329;font-weight:400;"><span style="color:#8c8c8c">0 шт</span></div><div class="a t" style="left:883.50px;width:600px;text-align:center;top:449.15px;font-size:14px;line-height:14px;color:#1f2329;font-weight:400;"><span style="color:#8c8c8c">0 шт</span></div><div class="a t" style="left:883.50px;width:600px;text-align:center;top:471.15px;font-size:14px;line-height:14px;color:#1f2329;font-weight:400;"><span style="color:#8c8c8c">0 дн</span></div><div class="a" style="left:1265px;top:422px;width:107px;height:1px;background:#d6dbe0"></div><div class="a" style="left:1265px;top:444px;width:107px;height:1px;background:#d6dbe0"></div><div class="a" style="left:1265px;top:466px;width:107px;height:1px;background:#d6dbe0"></div><div class="a t" style="left:1018.50px;width:600px;text-align:center;top:404.15px;font-size:14px;line-height:14px;color:#1f2329;font-weight:400;"><span style="color:#8c8c8c">0 шт</span></div><div class="a t" style="left:1018.50px;width:600px;text-align:center;top:427.15px;font-size:14px;line-height:14px;color:#1f2329;font-weight:400;"><span style="color:#8c8c8c">0 шт</span></div><div class="a t" style="left:1018.50px;width:600px;text-align:center;top:449.15px;font-size:14px;line-height:14px;color:#1f2329;font-weight:400;"><span style="color:#8c8c8c">0 шт</span></div><div class="a t" style="left:1018.50px;width:600px;text-align:center;top:471.15px;font-size:14px;line-height:14px;color:#1f2329;font-weight:400;"><span style="color:#8c8c8c">0 дн</span></div><div class="a" style="left:1400px;top:422px;width:107px;height:1px;background:#d6dbe0"></div><div class="a" style="left:1400px;top:444px;width:107px;height:1px;background:#d6dbe0"></div><div class="a" style="left:1400px;top:466px;width:107px;height:1px;background:#d6dbe0"></div><div class="a t" style="left:1153.50px;width:600px;text-align:center;top:404.15px;font-size:14px;line-height:14px;color:#1f2329;font-weight:400;"><span style="color:#8c8c8c">0 шт</span> <b style="color:#1450f0;font-size:15px">+3</b></div><div class="a t" style="left:1153.50px;width:600px;text-align:center;top:427.15px;font-size:14px;line-height:14px;color:#1f2329;font-weight:400;"><span style="color:#1f2329">1 шт</span></div><div class="a t" style="left:1153.50px;width:600px;text-align:center;top:449.15px;font-size:14px;line-height:14px;color:#1f2329;font-weight:400;"><span style="color:#1f2329">2 шт</span></div><div class="a t" style="left:1153.50px;width:600px;text-align:center;top:471.15px;font-size:14px;line-height:14px;color:#1f2329;font-weight:400;"><span style="color:#1f2329">7 дн</span></div><div class="a" style="left:1535px;top:422px;width:107px;height:1px;background:#d6dbe0"></div><div class="a" style="left:1535px;top:444px;width:107px;height:1px;background:#d6dbe0"></div><div class="a" style="left:1535px;top:466px;width:107px;height:1px;background:#d6dbe0"></div><div class="a t" style="left:1288.50px;width:600px;text-align:center;top:404.15px;font-size:14px;line-height:14px;color:#1f2329;font-weight:400;"><span style="color:#8c8c8c">0 шт</span></div><div class="a t" style="left:1288.50px;width:600px;text-align:center;top:427.15px;font-size:14px;line-height:14px;color:#1f2329;font-weight:400;"><span style="color:#8c8c8c">0 шт</span></div><div class="a t" style="left:1288.50px;width:600px;text-align:center;top:449.15px;font-size:14px;line-height:14px;color:#1f2329;font-weight:400;"><span style="color:#8c8c8c">0 шт</span></div><div class="a t" style="left:1288.50px;width:600px;text-align:center;top:471.15px;font-size:14px;line-height:14px;color:#1f2329;font-weight:400;"><span style="color:#8c8c8c">0 дн</span></div><div class="a" style="left:1670px;top:422px;width:107px;height:1px;background:#d6dbe0"></div><div class="a" style="left:1670px;top:444px;width:107px;height:1px;background:#d6dbe0"></div><div class="a" style="left:1670px;top:466px;width:107px;height:1px;background:#d6dbe0"></div><div class="a t" style="left:1423.50px;width:600px;text-align:center;top:404.15px;font-size:14px;line-height:14px;color:#1f2329;font-weight:400;"><span style="color:#8c8c8c">0 шт</span></div><div class="a t" style="left:1423.50px;width:600px;text-align:center;top:427.15px;font-size:14px;line-height:14px;color:#1f2329;font-weight:400;"><span style="color:#8c8c8c">0 шт</span></div><div class="a t" style="left:1423.50px;width:600px;text-align:center;top:449.15px;font-size:14px;line-height:14px;color:#1f2329;font-weight:400;"><span style="color:#8c8c8c">0 шт</span></div><div class="a t" style="left:1423.50px;width:600px;text-align:center;top:471.15px;font-size:14px;line-height:14px;color:#1f2329;font-weight:400;"><span style="color:#8c8c8c">0 дн</span></div><div class="a" style="left:0px;top:495px;width:428px;height:100px;background:#efefef"></div><div class="a" style="left:0px;top:495px;width:1790px;height:1px;background:#d3d9df"></div><div class="a" style="left:306px;top:498px;width:1px;height:94px;background:#d6dce2"></div><div class="a" style="left:428px;top:495px;width:1px;height:100px;background:#d0d6dc"></div><svg style="left:2px;top:498px;border-radius:4px" width="60" height="80" viewBox="0 0 60 80"><clipPath id="c2498"><rect width="60" height="80" rx="4"/></clipPath><g clip-path="url(#c2498)"><rect width="60" height="80" fill="#0b1330"/><ellipse cx="50" cy="6" rx="16" ry="9" fill="#2a5a98" opacity="0.6"/><ellipse cx="52" cy="62" rx="14" ry="20" fill="#18305e" opacity="0.5"/><ellipse cx="14" cy="32" rx="22" ry="9" fill="#3b2a2a" transform="rotate(12 14 32)"/><circle cx="7" cy="34" r="10" fill="#4a2418"/><circle cx="7" cy="34" r="6.5" fill="none" stroke="#c9521f" stroke-width="1.3" opacity="0.8"/><g transform="rotate(-30 33 42)"><rect x="4" y="33" width="58" height="18" rx="8" fill="#e4ecf3"/><path d="M10 38h48M10 42h48M10 46h48" stroke="#b8d0c8" stroke-width="0.5"/><rect x="4" y="33" width="9" height="18" rx="8" fill="#d5dde6"/><rect x="36" y="33" width="5" height="18" fill="#5aa6e4"/></g><text x="35" y="14" font-size="12" textLength="24" lengthAdjust="spacingAndGlyphs" fill="#c8e6ff" style="font-family:'Liberation Sans';font-weight:bold">ЕНКА</text><rect x="38" y="16" width="21" height="5" fill="#e5531a"/><path d="M18 64 L58 42" stroke="#99a" stroke-width="0.6"/><text x="37" y="58" font-size="8" textLength="20" lengthAdjust="spacingAndGlyphs" fill="#fff" style="font-family:'Liberation Sans';font-weight:bold">5см</text><text x="3" y="74" font-size="7" textLength="18" lengthAdjust="spacingAndGlyphs" fill="#f0c6a4" style="font-family:'Liberation Sans';font-weight:bold">РУЛОН</text><rect x="21" y="65" width="22" height="11" fill="#f05a14"/><text x="23" y="75" font-size="10" textLength="18" lengthAdjust="spacingAndGlyphs" fill="#fff" style="font-family:'Liberation Sans';font-weight:bold">10м</text></g></svg><div class="a" style="left:5px;top:501px;width:35px;height:22px;border-radius:4px;background:linear-gradient(90deg,#c80fa9,#3c0f70);color:#fff;font:17px/22px 'Liberation Sans';text-align:center;letter-spacing:-1px">WB</div><div class="a t" style="left:70.80px;top:499.00px;font-size:13.7px;line-height:13.7px;color:#2c3640;font-weight:700;">Средства для заживления</div><div class="a t" style="left:70.80px;top:515.00px;font-size:13.7px;line-height:13.7px;color:#2c3640;font-weight:700;">татуировок</div><div class="a t" style="left:70.80px;top:531.00px;font-size:13.7px;line-height:13.7px;color:#58626c;font-weight:400;">10M10M5CM</div><div class="a t" style="left:70.80px;top:547.00px;font-size:13.7px;line-height:13.7px;color:#58626c;font-weight:400;">SKU: 77141580</div><div class="a t" style="left:66.50px;width:600px;text-align:center;top:505.70px;font-size:14.3px;line-height:14.3px;color:#666;font-weight:400;">Остатки</div><div class="a t" style="left:66.50px;width:600px;text-align:center;top:527.90px;font-size:14.3px;line-height:14.3px;color:#666;font-weight:400;">В пути</div><div class="a t" style="left:66.50px;width:600px;text-align:center;top:549.90px;font-size:14.3px;line-height:14.3px;color:#666;font-weight:400;">Заказы за 14 дн.</div><div class="a t" style="left:66.50px;width:600px;text-align:center;top:571.90px;font-size:14.3px;line-height:14.3px;color:#666;font-weight:400;">Хватит на</div><div class="a" style="left:311px;top:523px;width:111px;height:1px;background:#d6dbe0"></div><div class="a" style="left:311px;top:545px;width:111px;height:1px;background:#d6dbe0"></div><div class="a" style="left:311px;top:567px;width:111px;height:1px;background:#d6dbe0"></div><div class="a" style="left:431px;top:500px;width:137px;height:91px;background:#f6dadf;border:1px solid #df7a8c;border-radius:6px"></div><div class="a" style="left:436px;top:523px;width:127px;height:1px;background:#cfdde4"></div><div class="a" style="left:436px;top:545px;width:127px;height:1px;background:#cfdde4"></div><div class="a" style="left:436px;top:567px;width:127px;height:1px;background:#cfdde4"></div><div class="a t" style="left:199.50px;width:600px;text-align:center;top:505.15px;font-size:14px;line-height:14px;color:#1f2329;font-weight:400;"><span style="color:#1f2329">8 шт</span></div><div class="a t" style="left:199.50px;width:600px;text-align:center;top:528.15px;font-size:14px;line-height:14px;color:#1f2329;font-weight:400;"><span style="color:#1f2329">26 шт</span></div><div class="a t" style="left:199.50px;width:600px;text-align:center;top:550.15px;font-size:14px;line-height:14px;color:#1f2329;font-weight:400;"><span style="color:#1f2329">26 шт</span></div><div class="a t" style="left:199.50px;width:600px;text-align:center;top:572.15px;font-size:14px;line-height:14px;color:#1f2329;font-weight:400;"><span style="color:#1f2329">18 дн</span></div><div class="a" style="left:572px;top:500px;width:135px;height:91px;background:#ddeff3;border:1px solid #88c9d5;border-radius:6px"></div><div class="a" style="left:577px;top:523px;width:125px;height:1px;background:#d8d6d9"></div><div class="a" style="left:577px;top:545px;width:125px;height:1px;background:#d8d6d9"></div><div class="a" style="left:577px;top:567px;width:125px;height:1px;background:#d8d6d9"></div><div class="a t" style="left:339.50px;width:600px;text-align:center;top:505.15px;font-size:14px;line-height:14px;color:#1f2329;font-weight:400;"><span style="color:#1f2329">3 шт</span> <b style="color:#1450f0;font-size:15px">+22</b></div><div class="a t" style="left:339.50px;width:600px;text-align:center;top:528.15px;font-size:14px;line-height:14px;color:#1f2329;font-weight:400;"><span style="color:#1f2329">5 шт</span></div><div class="a t" style="left:339.50px;width:600px;text-align:center;top:550.15px;font-size:14px;line-height:14px;color:#1f2329;font-weight:400;"><span style="color:#1f2329">17 шт</span></div><div class="a t" style="left:339.50px;width:600px;text-align:center;top:572.15px;font-size:14px;line-height:14px;color:#1f2329;font-weight:400;"><span style="color:#1f2329">7 дн</span></div><div class="a" style="left:717px;top:500px;width:115px;height:91px;background:#f6dadf;border:1px solid #df7a8c;border-radius:6px"></div><div class="a" style="left:726px;top:523px;width:105px;height:1px;background:#cfdde4"></div><div class="a" style="left:726px;top:545px;width:105px;height:1px;background:#cfdde4"></div><div class="a" style="left:726px;top:567px;width:105px;height:1px;background:#cfdde4"></div><div class="a t" style="left:478.50px;width:600px;text-align:center;top:505.15px;font-size:14px;line-height:14px;color:#1f2329;font-weight:400;"><span style="color:#8c8c8c">0 шт</span> <b style="color:#1450f0;font-size:15px">+6</b></div><div class="a t" style="left:478.50px;width:600px;text-align:center;top:528.15px;font-size:14px;line-height:14px;color:#1f2329;font-weight:400;"><span style="color:#8c8c8c">0 шт</span></div><div class="a t" style="left:478.50px;width:600px;text-align:center;top:550.15px;font-size:14px;line-height:14px;color:#1f2329;font-weight:400;"><span style="color:#1f2329">3 шт</span></div><div class="a t" style="left:478.50px;width:600px;text-align:center;top:572.15px;font-size:14px;line-height:14px;color:#1f2329;font-weight:400;"><span style="color:#8c8c8c">0 дн</span></div><div class="a" style="left:852px;top:500px;width:115px;height:91px;background:#f6dadf;border:1px solid #df7a8c;border-radius:6px"></div><div class="a" style="left:861px;top:523px;width:105px;height:1px;background:#cfdde4"></div><div class="a" style="left:861px;top:545px;width:105px;height:1px;background:#cfdde4"></div><div class="a" style="left:861px;top:567px;width:105px;height:1px;background:#cfdde4"></div><div class="a t" style="left:613.50px;width:600px;text-align:center;top:505.15px;font-size:14px;line-height:14px;color:#1f2329;font-weight:400;"><span style="color:#8c8c8c">0 шт</span></div><div class="a t" style="left:613.50px;width:600px;text-align:center;top:528.15px;font-size:14px;line-height:14px;color:#1f2329;font-weight:400;"><span style="color:#8c8c8c">0 шт</span></div><div class="a t" style="left:613.50px;width:600px;text-align:center;top:550.15px;font-size:14px;line-height:14px;color:#1f2329;font-weight:400;"><span style="color:#8c8c8c">0 шт</span></div><div class="a t" style="left:613.50px;width:600px;text-align:center;top:572.15px;font-size:14px;line-height:14px;color:#1f2329;font-weight:400;"><span style="color:#8c8c8c">0 дн</span></div><div class="a" style="left:987px;top:500px;width:115px;height:91px;background:#f6dadf;border:1px solid #df7a8c;border-radius:6px"></div><div class="a" style="left:996px;top:523px;width:105px;height:1px;background:#cfdde4"></div><div class="a" style="left:996px;top:545px;width:105px;height:1px;background:#cfdde4"></div><div class="a" style="left:996px;top:567px;width:105px;height:1px;background:#cfdde4"></div><div class="a t" style="left:748.50px;width:600px;text-align:center;top:505.15px;font-size:14px;line-height:14px;color:#1f2329;font-weight:400;"><span style="color:#8c8c8c">0 шт</span> <b style="color:#1450f0;font-size:15px">+2</b></div><div class="a t" style="left:748.50px;width:600px;text-align:center;top:528.15px;font-size:14px;line-height:14px;color:#1f2329;font-weight:400;"><span style="color:#8c8c8c">0 шт</span></div><div class="a t" style="left:748.50px;width:600px;text-align:center;top:550.15px;font-size:14px;line-height:14px;color:#1f2329;font-weight:400;"><span style="color:#1f2329">1 шт</span></div><div class="a t" style="left:748.50px;width:600px;text-align:center;top:572.15px;font-size:14px;line-height:14px;color:#1f2329;font-weight:400;"><span style="color:#8c8c8c">0 дн</span></div><div class="a" style="left:1122px;top:500px;width:115px;height:91px;background:#f6dadf;border:1px solid #df7a8c;border-radius:6px"></div><div class="a" style="left:1131px;top:523px;width:105px;height:1px;background:#cfdde4"></div><div class="a" style="left:1131px;top:545px;width:105px;height:1px;background:#cfdde4"></div><div class="a" style="left:1131px;top:567px;width:105px;height:1px;background:#cfdde4"></div><div class="a t" style="left:883.50px;width:600px;text-align:center;top:505.15px;font-size:14px;line-height:14px;color:#1f2329;font-weight:400;"><span style="color:#8c8c8c">0 шт</span></div><div class="a t" style="left:883.50px;width:600px;text-align:center;top:528.15px;font-size:14px;line-height:14px;color:#1f2329;font-weight:400;"><span style="color:#8c8c8c">0 шт</span></div><div class="a t" style="left:883.50px;width:600px;text-align:center;top:550.15px;font-size:14px;line-height:14px;color:#1f2329;font-weight:400;"><span style="color:#8c8c8c">0 шт</span></div><div class="a t" style="left:883.50px;width:600px;text-align:center;top:572.15px;font-size:14px;line-height:14px;color:#1f2329;font-weight:400;"><span style="color:#8c8c8c">0 дн</span></div><div class="a" style="left:1257px;top:500px;width:115px;height:91px;background:#f6dadf;border:1px solid #df7a8c;border-radius:6px"></div><div class="a" style="left:1266px;top:523px;width:105px;height:1px;background:#cfdde4"></div><div class="a" style="left:1266px;top:545px;width:105px;height:1px;background:#cfdde4"></div><div class="a" style="left:1266px;top:567px;width:105px;height:1px;background:#cfdde4"></div><div class="a t" style="left:1018.50px;width:600px;text-align:center;top:505.15px;font-size:14px;line-height:14px;color:#1f2329;font-weight:400;"><span style="color:#8c8c8c">0 шт</span></div><div class="a t" style="left:1018.50px;width:600px;text-align:center;top:528.15px;font-size:14px;line-height:14px;color:#1f2329;font-weight:400;"><span style="color:#8c8c8c">0 шт</span></div><div class="a t" style="left:1018.50px;width:600px;text-align:center;top:550.15px;font-size:14px;line-height:14px;color:#1f2329;font-weight:400;"><span style="color:#8c8c8c">0 шт</span></div><div class="a t" style="left:1018.50px;width:600px;text-align:center;top:572.15px;font-size:14px;line-height:14px;color:#1f2329;font-weight:400;"><span style="color:#8c8c8c">0 дн</span></div><div class="a" style="left:1392px;top:500px;width:115px;height:91px;background:#f6dadf;border:1px solid #df7a8c;border-radius:6px"></div><div class="a" style="left:1401px;top:523px;width:105px;height:1px;background:#cfdde4"></div><div class="a" style="left:1401px;top:545px;width:105px;height:1px;background:#cfdde4"></div><div class="a" style="left:1401px;top:567px;width:105px;height:1px;background:#cfdde4"></div><div class="a t" style="left:1153.50px;width:600px;text-align:center;top:505.15px;font-size:14px;line-height:14px;color:#1f2329;font-weight:400;"><span style="color:#8c8c8c">0 шт</span> <b style="color:#1450f0;font-size:15px">+2</b></div><div class="a t" style="left:1153.50px;width:600px;text-align:center;top:528.15px;font-size:14px;line-height:14px;color:#1f2329;font-weight:400;"><span style="color:#1f2329">5 шт</span></div><div class="a t" style="left:1153.50px;width:600px;text-align:center;top:550.15px;font-size:14px;line-height:14px;color:#1f2329;font-weight:400;"><span style="color:#1f2329">4 шт</span></div><div class="a t" style="left:1153.50px;width:600px;text-align:center;top:572.15px;font-size:14px;line-height:14px;color:#1f2329;font-weight:400;"><span style="color:#1f2329">18 дн</span></div><div class="a" style="left:1527px;top:500px;width:115px;height:91px;background:#f6dadf;border:1px solid #df7a8c;border-radius:6px"></div><div class="a" style="left:1536px;top:523px;width:105px;height:1px;background:#cfdde4"></div><div class="a" style="left:1536px;top:545px;width:105px;height:1px;background:#cfdde4"></div><div class="a" style="left:1536px;top:567px;width:105px;height:1px;background:#cfdde4"></div><div class="a t" style="left:1288.50px;width:600px;text-align:center;top:505.15px;font-size:14px;line-height:14px;color:#1f2329;font-weight:400;"><span style="color:#8c8c8c">0 шт</span></div><div class="a t" style="left:1288.50px;width:600px;text-align:center;top:528.15px;font-size:14px;line-height:14px;color:#1f2329;font-weight:400;"><span style="color:#8c8c8c">0 шт</span></div><div class="a t" style="left:1288.50px;width:600px;text-align:center;top:550.15px;font-size:14px;line-height:14px;color:#1f2329;font-weight:400;"><span style="color:#8c8c8c">0 шт</span></div><div class="a t" style="left:1288.50px;width:600px;text-align:center;top:572.15px;font-size:14px;line-height:14px;color:#1f2329;font-weight:400;"><span style="color:#8c8c8c">0 дн</span></div><div class="a" style="left:1662px;top:500px;width:115px;height:91px;background:#f6dadf;border:1px solid #df7a8c;border-radius:6px"></div><div class="a" style="left:1671px;top:523px;width:105px;height:1px;background:#cfdde4"></div><div class="a" style="left:1671px;top:545px;width:105px;height:1px;background:#cfdde4"></div><div class="a" style="left:1671px;top:567px;width:105px;height:1px;background:#cfdde4"></div><div class="a t" style="left:1423.50px;width:600px;text-align:center;top:505.15px;font-size:14px;line-height:14px;color:#1f2329;font-weight:400;"><span style="color:#8c8c8c">0 шт</span></div><div class="a t" style="left:1423.50px;width:600px;text-align:center;top:528.15px;font-size:14px;line-height:14px;color:#1f2329;font-weight:400;"><span style="color:#8c8c8c">0 шт</span></div><div class="a t" style="left:1423.50px;width:600px;text-align:center;top:550.15px;font-size:14px;line-height:14px;color:#1f2329;font-weight:400;"><span style="color:#8c8c8c">0 шт</span></div><div class="a t" style="left:1423.50px;width:600px;text-align:center;top:572.15px;font-size:14px;line-height:14px;color:#1f2329;font-weight:400;"><span style="color:#8c8c8c">0 дн</span></div><div class="a" style="left:0px;top:595px;width:428px;height:100px;background:#efefef"></div><div class="a" style="left:0px;top:595px;width:1790px;height:1px;background:#d3d9df"></div><div class="a" style="left:306px;top:598px;width:1px;height:94px;background:#d6dce2"></div><div class="a" style="left:428px;top:595px;width:1px;height:100px;background:#d0d6dc"></div><svg style="left:2px;top:598px;border-radius:4px" width="60" height="80" viewBox="0 0 60 80"><clipPath id="c2598"><rect width="60" height="80" rx="4"/></clipPath><g clip-path="url(#c2598)"><rect width="60" height="80" fill="#0b1330"/><ellipse cx="50" cy="6" rx="16" ry="9" fill="#2a5a98" opacity="0.6"/><ellipse cx="14" cy="32" rx="22" ry="9" fill="#3b2a2a" transform="rotate(12 14 32)"/><circle cx="7" cy="34" r="10" fill="#4a2418"/><circle cx="7" cy="34" r="6.5" fill="none" stroke="#c9521f" stroke-width="1.3" opacity="0.8"/><path d="M0 52 L26 44 L60 74 L60 80 L0 80 Z" fill="#e2e2e4"/><path d="M26 44 L60 74 L38 80 L0 80Z" fill="#ececee"/><g transform="rotate(-55 44 48)"><rect x="22" y="37" width="46" height="24" rx="8" fill="#eef0f2"/><rect x="38" y="37" width="5" height="24" fill="#a9cbe6"/><ellipse cx="63" cy="49" rx="5" ry="11" fill="#fafafa" stroke="#cfd3d6" stroke-width="0.8"/></g><path d="M3 61 L20 53 L22 56 L5 64Z" fill="#f05a14"/><path d="M27 48 L39 68 L36 70 L24 50Z" fill="#f05a14"/><text x="35" y="14" font-size="12" textLength="24" lengthAdjust="spacingAndGlyphs" fill="#c8e6ff" style="font-family:'Liberation Sans';font-weight:bold">ЕНКА</text><rect x="38" y="16" width="21" height="5" fill="#e5531a"/></g></svg><div class="a" style="left:5px;top:601px;width:35px;height:22px;border-radius:4px;background:linear-gradient(90deg,#c80fa9,#3c0f70);color:#fff;font:17px/22px 'Liberation Sans';text-align:center;letter-spacing:-1px">WB</div><div class="a t" style="left:70.80px;top:599.00px;font-size:13.7px;line-height:13.7px;color:#2c3640;font-weight:700;">Средства для заживления</div><div class="a t" style="left:70.80px;top:615.00px;font-size:13.7px;line-height:13.7px;color:#2c3640;font-weight:700;">татуировок</div><div class="a t" style="left:70.80px;top:631.00px;font-size:13.7px;line-height:13.7px;color:#58626c;font-weight:400;">1213</div><div class="a t" style="left:70.80px;top:647.00px;font-size:13.7px;line-height:13.7px;color:#58626c;font-weight:400;">SKU: 41556791</div><div class="a t" style="left:66.50px;width:600px;text-align:center;top:605.70px;font-size:14.3px;line-height:14.3px;color:#666;font-weight:400;">Остатки</div><div class="a t" style="left:66.50px;width:600px;text-align:center;top:627.90px;font-size:14.3px;line-height:14.3px;color:#666;font-weight:400;">В пути</div><div class="a t" style="left:66.50px;width:600px;text-align:center;top:649.90px;font-size:14.3px;line-height:14.3px;color:#666;font-weight:400;">Заказы за 14 дн.</div><div class="a t" style="left:66.50px;width:600px;text-align:center;top:671.90px;font-size:14.3px;line-height:14.3px;color:#666;font-weight:400;">Хватит на</div><div class="a" style="left:311px;top:623px;width:111px;height:1px;background:#d6dbe0"></div><div class="a" style="left:311px;top:645px;width:111px;height:1px;background:#d6dbe0"></div><div class="a" style="left:311px;top:667px;width:111px;height:1px;background:#d6dbe0"></div><div class="a" style="left:436px;top:623px;width:127px;height:1px;background:#d6dbe0"></div><div class="a" style="left:436px;top:645px;width:127px;height:1px;background:#d6dbe0"></div><div class="a" style="left:436px;top:667px;width:127px;height:1px;background:#d6dbe0"></div><div class="a t" style="left:199.50px;width:600px;text-align:center;top:605.15px;font-size:14px;line-height:14px;color:#1f2329;font-weight:400;"><span style="color:#1f2329">134 шт</span></div><div class="a t" style="left:199.50px;width:600px;text-align:center;top:628.15px;font-size:14px;line-height:14px;color:#1f2329;font-weight:400;"><span style="color:#8c8c8c">0 шт</span></div><div class="a t" style="left:199.50px;width:600px;text-align:center;top:650.15px;font-size:14px;line-height:14px;color:#1f2329;font-weight:400;"><span style="color:#1f2329">76 шт</span></div><div class="a t" style="left:199.50px;width:600px;text-align:center;top:672.15px;font-size:14px;line-height:14px;color:#1f2329;font-weight:400;"><span style="color:#1f2329">25 дн</span></div><div class="a" style="left:572px;top:600px;width:135px;height:91px;background:#ddeff3;border:1px solid #88c9d5;border-radius:6px"></div><div class="a" style="left:577px;top:623px;width:125px;height:1px;background:#d8d6d9"></div><div class="a" style="left:577px;top:645px;width:125px;height:1px;background:#d8d6d9"></div><div class="a" style="left:577px;top:667px;width:125px;height:1px;background:#d8d6d9"></div><div class="a t" style="left:339.50px;width:600px;text-align:center;top:605.15px;font-size:14px;line-height:14px;color:#1f2329;font-weight:400;"><span style="color:#1f2329">27 шт</span> <b style="color:#1450f0;font-size:15px">+75</b></div><div class="a t" style="left:339.50px;width:600px;text-align:center;top:628.15px;font-size:14px;line-height:14px;color:#1f2329;font-weight:400;"><span style="color:#8c8c8c">0 шт</span></div><div class="a t" style="left:339.50px;width:600px;text-align:center;top:650.15px;font-size:14px;line-height:14px;color:#1f2329;font-weight:400;"><span style="color:#1f2329">58 шт</span></div><div class="a t" style="left:339.50px;width:600px;text-align:center;top:672.15px;font-size:14px;line-height:14px;color:#1f2329;font-weight:400;"><span style="color:#1f2329">7 дн</span></div><div class="a" style="left:717px;top:600px;width:115px;height:91px;background:#f6dadf;border:1px solid #df7a8c;border-radius:6px"></div><div class="a" style="left:726px;top:623px;width:105px;height:1px;background:#cfdde4"></div><div class="a" style="left:726px;top:645px;width:105px;height:1px;background:#cfdde4"></div><div class="a" style="left:726px;top:667px;width:105px;height:1px;background:#cfdde4"></div><div class="a t" style="left:478.50px;width:600px;text-align:center;top:605.15px;font-size:14px;line-height:14px;color:#1f2329;font-weight:400;"><span style="color:#8c8c8c">0 шт</span> <b style="color:#1450f0;font-size:15px">+40</b></div><div class="a t" style="left:478.50px;width:600px;text-align:center;top:628.15px;font-size:14px;line-height:14px;color:#1f2329;font-weight:400;"><span style="color:#8c8c8c">0 шт</span></div><div class="a t" style="left:478.50px;width:600px;text-align:center;top:650.15px;font-size:14px;line-height:14px;color:#1f2329;font-weight:400;"><span style="color:#1f2329">22 шт</span></div><div class="a t" style="left:478.50px;width:600px;text-align:center;top:672.15px;font-size:14px;line-height:14px;color:#1f2329;font-weight:400;"><span style="color:#8c8c8c">0 дн</span></div><div class="a" style="left:852px;top:600px;width:115px;height:91px;background:#f6dadf;border:1px solid #df7a8c;border-radius:6px"></div><div class="a" style="left:861px;top:623px;width:105px;height:1px;background:#cfdde4"></div><div class="a" style="left:861px;top:645px;width:105px;height:1px;background:#cfdde4"></div><div class="a" style="left:861px;top:667px;width:105px;height:1px;background:#cfdde4"></div><div class="a t" style="left:613.50px;width:600px;text-align:center;top:605.15px;font-size:14px;line-height:14px;color:#1f2329;font-weight:400;"><span style="color:#8c8c8c">0 шт</span></div><div class="a t" style="left:613.50px;width:600px;text-align:center;top:628.15px;font-size:14px;line-height:14px;color:#1f2329;font-weight:400;"><span style="color:#8c8c8c">0 шт</span></div><div class="a t" style="left:613.50px;width:600px;text-align:center;top:650.15px;font-size:14px;line-height:14px;color:#1f2329;font-weight:400;"><span style="color:#8c8c8c">0 шт</span></div><div class="a t" style="left:613.50px;width:600px;text-align:center;top:672.15px;font-size:14px;line-height:14px;color:#1f2329;font-weight:400;"><span style="color:#8c8c8c">0 дн</span></div><div class="a" style="left:987px;top:600px;width:115px;height:91px;background:#f6dadf;border:1px solid #df7a8c;border-radius:6px"></div><div class="a" style="left:996px;top:623px;width:105px;height:1px;background:#cfdde4"></div><div class="a" style="left:996px;top:645px;width:105px;height:1px;background:#cfdde4"></div><div class="a" style="left:996px;top:667px;width:105px;height:1px;background:#cfdde4"></div><div class="a t" style="left:748.50px;width:600px;text-align:center;top:605.15px;font-size:14px;line-height:14px;color:#1f2329;font-weight:400;"><span style="color:#1f2329">6 шт</span></div><div class="a t" style="left:748.50px;width:600px;text-align:center;top:628.15px;font-size:14px;line-height:14px;color:#1f2329;font-weight:400;"><span style="color:#8c8c8c">0 шт</span></div><div class="a t" style="left:748.50px;width:600px;text-align:center;top:650.15px;font-size:14px;line-height:14px;color:#1f2329;font-weight:400;"><span style="color:#1f2329">1 шт</span></div><div class="a t" style="left:748.50px;width:600px;text-align:center;top:672.15px;font-size:14px;line-height:14px;color:#1f2329;font-weight:400;"><span style="color:#1f2329">84 дн</span></div><div class="a" style="left:1122px;top:600px;width:115px;height:91px;background:#f6dadf;border:1px solid #df7a8c;border-radius:6px"></div><div class="a" style="left:1131px;top:623px;width:105px;height:1px;background:#cfdde4"></div><div class="a" style="left:1131px;top:645px;width:105px;height:1px;background:#cfdde4"></div><div class="a" style="left:1131px;top:667px;width:105px;height:1px;background:#cfdde4"></div><div class="a t" style="left:883.50px;width:600px;text-align:center;top:605.15px;font-size:14px;line-height:14px;color:#1f2329;font-weight:400;"><span style="color:#8c8c8c">0 шт</span></div><div class="a t" style="left:883.50px;width:600px;text-align:center;top:628.15px;font-size:14px;line-height:14px;color:#1f2329;font-weight:400;"><span style="color:#8c8c8c">0 шт</span></div><div class="a t" style="left:883.50px;width:600px;text-align:center;top:650.15px;font-size:14px;line-height:14px;color:#1f2329;font-weight:400;"><span style="color:#8c8c8c">0 шт</span></div><div class="a t" style="left:883.50px;width:600px;text-align:center;top:672.15px;font-size:14px;line-height:14px;color:#1f2329;font-weight:400;"><span style="color:#8c8c8c">0 дн</span></div><div class="a" style="left:1257px;top:600px;width:115px;height:91px;background:#f6dadf;border:1px solid #df7a8c;border-radius:6px"></div><div class="a" style="left:1266px;top:623px;width:105px;height:1px;background:#cfdde4"></div><div class="a" style="left:1266px;top:645px;width:105px;height:1px;background:#cfdde4"></div><div class="a" style="left:1266px;top:667px;width:105px;height:1px;background:#cfdde4"></div><div class="a t" style="left:1018.50px;width:600px;text-align:center;top:605.15px;font-size:14px;line-height:14px;color:#1f2329;font-weight:400;"><span style="color:#8c8c8c">0 шт</span></div><div class="a t" style="left:1018.50px;width:600px;text-align:center;top:628.15px;font-size:14px;line-height:14px;color:#1f2329;font-weight:400;"><span style="color:#8c8c8c">0 шт</span></div><div class="a t" style="left:1018.50px;width:600px;text-align:center;top:650.15px;font-size:14px;line-height:14px;color:#1f2329;font-weight:400;"><span style="color:#8c8c8c">0 шт</span></div><div class="a t" style="left:1018.50px;width:600px;text-align:center;top:672.15px;font-size:14px;line-height:14px;color:#1f2329;font-weight:400;"><span style="color:#8c8c8c">0 дн</span></div><div class="a" style="left:1392px;top:600px;width:115px;height:91px;background:#f6dadf;border:1px solid #df7a8c;border-radius:6px"></div><div class="a" style="left:1401px;top:623px;width:105px;height:1px;background:#cfdde4"></div><div class="a" style="left:1401px;top:645px;width:105px;height:1px;background:#cfdde4"></div><div class="a" style="left:1401px;top:667px;width:105px;height:1px;background:#cfdde4"></div><div class="a t" style="left:1153.50px;width:600px;text-align:center;top:605.15px;font-size:14px;line-height:14px;color:#1f2329;font-weight:400;"><span style="color:#8c8c8c">0 шт</span> <b style="color:#1450f0;font-size:15px">+27</b></div><div class="a t" style="left:1153.50px;width:600px;text-align:center;top:628.15px;font-size:14px;line-height:14px;color:#1f2329;font-weight:400;"><span style="color:#8c8c8c">0 шт</span></div><div class="a t" style="left:1153.50px;width:600px;text-align:center;top:650.15px;font-size:14px;line-height:14px;color:#1f2329;font-weight:400;"><span style="color:#1f2329">15 шт</span></div><div class="a t" style="left:1153.50px;width:600px;text-align:center;top:672.15px;font-size:14px;line-height:14px;color:#1f2329;font-weight:400;"><span style="color:#8c8c8c">0 дн</span></div><div class="a" style="left:1527px;top:600px;width:115px;height:91px;background:#f6dadf;border:1px solid #df7a8c;border-radius:6px"></div><div class="a" style="left:1536px;top:623px;width:105px;height:1px;background:#cfdde4"></div><div class="a" style="left:1536px;top:645px;width:105px;height:1px;background:#cfdde4"></div><div class="a" style="left:1536px;top:667px;width:105px;height:1px;background:#cfdde4"></div><div class="a t" style="left:1288.50px;width:600px;text-align:center;top:605.15px;font-size:14px;line-height:14px;color:#1f2329;font-weight:400;"><span style="color:#8c8c8c">0 шт</span></div><div class="a t" style="left:1288.50px;width:600px;text-align:center;top:628.15px;font-size:14px;line-height:14px;color:#1f2329;font-weight:400;"><span style="color:#8c8c8c">0 шт</span></div><div class="a t" style="left:1288.50px;width:600px;text-align:center;top:650.15px;font-size:14px;line-height:14px;color:#1f2329;font-weight:400;"><span style="color:#8c8c8c">0 шт</span></div><div class="a t" style="left:1288.50px;width:600px;text-align:center;top:672.15px;font-size:14px;line-height:14px;color:#1f2329;font-weight:400;"><span style="color:#8c8c8c">0 дн</span></div><div class="a" style="left:1662px;top:600px;width:115px;height:91px;background:#f6dadf;border:1px solid #df7a8c;border-radius:6px"></div><div class="a" style="left:1671px;top:623px;width:105px;height:1px;background:#cfdde4"></div><div class="a" style="left:1671px;top:645px;width:105px;height:1px;background:#cfdde4"></div><div class="a" style="left:1671px;top:667px;width:105px;height:1px;background:#cfdde4"></div><div class="a t" style="left:1423.50px;width:600px;text-align:center;top:605.15px;font-size:14px;line-height:14px;color:#1f2329;font-weight:400;"><span style="color:#8c8c8c">0 шт</span></div><div class="a t" style="left:1423.50px;width:600px;text-align:center;top:628.15px;font-size:14px;line-height:14px;color:#1f2329;font-weight:400;"><span style="color:#8c8c8c">0 шт</span></div><div class="a t" style="left:1423.50px;width:600px;text-align:center;top:650.15px;font-size:14px;line-height:14px;color:#1f2329;font-weight:400;"><span style="color:#8c8c8c">0 шт</span></div><div class="a t" style="left:1423.50px;width:600px;text-align:center;top:672.15px;font-size:14px;line-height:14px;color:#1f2329;font-weight:400;"><span style="color:#8c8c8c">0 дн</span></div><div class="a" style="left:0px;top:695px;width:428px;height:100px;background:#efefef"></div><div class="a" style="left:0px;top:695px;width:1790px;height:1px;background:#d3d9df"></div><div class="a" style="left:306px;top:698px;width:1px;height:94px;background:#d6dce2"></div><div class="a" style="left:428px;top:695px;width:1px;height:100px;background:#d0d6dc"></div><svg style="left:2px;top:698px;border-radius:4px" width="60" height="80" viewBox="0 0 60 80"><clipPath id="c2698"><rect width="60" height="80" rx="4"/></clipPath><g clip-path="url(#c2698)"><rect width="60" height="80" fill="#0b1330"/><ellipse cx="50" cy="6" rx="16" ry="9" fill="#2a5a98" opacity="0.6"/><ellipse cx="52" cy="62" rx="14" ry="20" fill="#18305e" opacity="0.5"/><ellipse cx="14" cy="32" rx="22" ry="9" fill="#3b2a2a" transform="rotate(12 14 32)"/><circle cx="7" cy="34" r="10" fill="#4a2418"/><circle cx="7" cy="34" r="6.5" fill="none" stroke="#c9521f" stroke-width="1.3" opacity="0.8"/><g transform="rotate(-30 33 42)"><rect x="4" y="33" width="58" height="18" rx="8" fill="#e4ecf3"/><path d="M10 38h48M10 42h48M10 46h48" stroke="#b8d0c8" stroke-width="0.5"/><rect x="4" y="33" width="9" height="18" rx="8" fill="#d5dde6"/><rect x="36" y="33" width="5" height="18" fill="#5aa6e4"/></g><text x="35" y="14" font-size="12" textLength="24" lengthAdjust="spacingAndGlyphs" fill="#c8e6ff" style="font-family:'Liberation Sans';font-weight:bold">ЕНКА</text><rect x="38" y="16" width="21" height="5" fill="#e5531a"/><path d="M18 64 L58 42" stroke="#99a" stroke-width="0.6"/><text x="37" y="58" font-size="8" textLength="20" lengthAdjust="spacingAndGlyphs" fill="#fff" style="font-family:'Liberation Sans';font-weight:bold">10см</text><text x="3" y="74" font-size="7" textLength="18" lengthAdjust="spacingAndGlyphs" fill="#f0c6a4" style="font-family:'Liberation Sans';font-weight:bold">РУЛОН</text><rect x="21" y="65" width="22" height="11" fill="#f05a14"/><text x="23" y="75" font-size="10" textLength="18" lengthAdjust="spacingAndGlyphs" fill="#fff" style="font-family:'Liberation Sans';font-weight:bold">10м</text></g></svg><div class="a" style="left:5px;top:701px;width:35px;height:22px;border-radius:4px;background:linear-gradient(90deg,#c80fa9,#3c0f70);color:#fff;font:17px/22px 'Liberation Sans';text-align:center;letter-spacing:-1px">WB</div><div class="a t" style="left:70.80px;top:699.00px;font-size:13.7px;line-height:13.7px;color:#2c3640;font-weight:700;">Средства для заживления</div><div class="a t" style="left:70.80px;top:715.00px;font-size:13.7px;line-height:13.7px;color:#2c3640;font-weight:700;">татуировок</div><div class="a t" style="left:70.80px;top:731.00px;font-size:13.7px;line-height:13.7px;color:#58626c;font-weight:400;">1214</div><div class="a t" style="left:70.80px;top:747.00px;font-size:13.7px;line-height:13.7px;color:#58626c;font-weight:400;">SKU: 41556792</div><div class="a t" style="left:66.50px;width:600px;text-align:center;top:705.70px;font-size:14.3px;line-height:14.3px;color:#666;font-weight:400;">Остатки</div><div class="a t" style="left:66.50px;width:600px;text-align:center;top:727.90px;font-size:14.3px;line-height:14.3px;color:#666;font-weight:400;">В пути</div><div class="a t" style="left:66.50px;width:600px;text-align:center;top:749.90px;font-size:14.3px;line-height:14.3px;color:#666;font-weight:400;">Заказы за 14 дн.</div><div class="a t" style="left:66.50px;width:600px;text-align:center;top:771.90px;font-size:14.3px;line-height:14.3px;color:#666;font-weight:400;">Хватит на</div><div class="a" style="left:311px;top:723px;width:111px;height:1px;background:#d6dbe0"></div><div class="a" style="left:311px;top:745px;width:111px;height:1px;background:#d6dbe0"></div><div class="a" style="left:311px;top:767px;width:111px;height:1px;background:#d6dbe0"></div><div class="a" style="left:436px;top:723px;width:127px;height:1px;background:#d6dbe0"></div><div class="a" style="left:436px;top:745px;width:127px;height:1px;background:#d6dbe0"></div><div class="a" style="left:436px;top:767px;width:127px;height:1px;background:#d6dbe0"></div><div class="a t" style="left:199.50px;width:600px;text-align:center;top:705.15px;font-size:14px;line-height:14px;color:#1f2329;font-weight:400;"><span style="color:#1f2329">100 шт</span></div><div class="a t" style="left:199.50px;width:600px;text-align:center;top:728.15px;font-size:14px;line-height:14px;color:#1f2329;font-weight:400;"><span style="color:#1f2329">110 шт</span></div><div class="a t" style="left:199.50px;width:600px;text-align:center;top:750.15px;font-size:14px;line-height:14px;color:#1f2329;font-weight:400;"><span style="color:#8c8c8c">0 шт</span></div><div class="a t" style="left:199.50px;width:600px;text-align:center;top:772.15px;font-size:14px;line-height:14px;color:#1f2329;font-weight:400;"><span style="color:#8c8c8c">0 дн</span></div><div class="a" style="left:572px;top:700px;width:135px;height:91px;background:#ddeff3;border:1px solid #88c9d5;border-radius:6px"></div><div class="a" style="left:577px;top:723px;width:125px;height:1px;background:#d8d6d9"></div><div class="a" style="left:577px;top:745px;width:125px;height:1px;background:#d8d6d9"></div><div class="a" style="left:577px;top:767px;width:125px;height:1px;background:#d8d6d9"></div><div class="a t" style="left:339.50px;width:600px;text-align:center;top:705.15px;font-size:14px;line-height:14px;color:#1f2329;font-weight:400;"><span style="color:#1f2329">51 шт</span></div><div class="a t" style="left:339.50px;width:600px;text-align:center;top:728.15px;font-size:14px;line-height:14px;color:#1f2329;font-weight:400;"><span style="color:#1f2329">30 шт</span></div><div class="a t" style="left:339.50px;width:600px;text-align:center;top:750.15px;font-size:14px;line-height:14px;color:#1f2329;font-weight:400;"><span style="color:#8c8c8c">0 шт</span></div><div class="a t" style="left:339.50px;width:600px;text-align:center;top:772.15px;font-size:14px;line-height:14px;color:#1f2329;font-weight:400;"><span style="color:#8c8c8c">0 дн</span></div><div class="a" style="left:725px;top:722px;width:107px;height:1px;background:#d6dbe0"></div><div class="a" style="left:725px;top:744px;width:107px;height:1px;background:#d6dbe0"></div><div class="a" style="left:725px;top:766px;width:107px;height:1px;background:#d6dbe0"></div><div class="a t" style="left:478.50px;width:600px;text-align:center;top:704.15px;font-size:14px;line-height:14px;color:#1f2329;font-weight:400;"><span style="color:#1f2329">7 шт</span> <b style="color:#1450f0;font-size:15px">+16</b></div><div class="a t" style="left:478.50px;width:600px;text-align:center;top:727.15px;font-size:14px;line-height:14px;color:#1f2329;font-weight:400;"><span style="color:#8c8c8c">0 шт</span></div><div class="a t" style="left:478.50px;width:600px;text-align:center;top:749.15px;font-size:14px;line-height:14px;color:#1f2329;font-weight:400;"><span style="color:#8c8c8c">0 шт</span></div><div class="a t" style="left:478.50px;width:600px;text-align:center;top:771.15px;font-size:14px;line-height:14px;color:#1f2329;font-weight:400;"><span style="color:#8c8c8c">0 дн</span></div><div class="a" style="left:860px;top:722px;width:107px;height:1px;background:#d6dbe0"></div><div class="a" style="left:860px;top:744px;width:107px;height:1px;background:#d6dbe0"></div><div class="a" style="left:860px;top:766px;width:107px;height:1px;background:#d6dbe0"></div><div class="a t" style="left:613.50px;width:600px;text-align:center;top:704.15px;font-size:14px;line-height:14px;color:#1f2329;font-weight:400;"><span style="color:#8c8c8c">0 шт</span></div><div class="a t" style="left:613.50px;width:600px;text-align:center;top:727.15px;font-size:14px;line-height:14px;color:#1f2329;font-weight:400;"><span style="color:#8c8c8c">0 шт</span></div><div class="a t" style="left:613.50px;width:600px;text-align:center;top:749.15px;font-size:14px;line-height:14px;color:#1f2329;font-weight:400;"><span style="color:#8c8c8c">0 шт</span></div><div class="a t" style="left:613.50px;width:600px;text-align:center;top:771.15px;font-size:14px;line-height:14px;color:#1f2329;font-weight:400;"><span style="color:#8c8c8c">0 дн</span></div><div class="a" style="left:995px;top:722px;width:107px;height:1px;background:#d6dbe0"></div><div class="a" style="left:995px;top:744px;width:107px;height:1px;background:#d6dbe0"></div><div class="a" style="left:995px;top:766px;width:107px;height:1px;background:#d6dbe0"></div><div class="a t" style="left:748.50px;width:600px;text-align:center;top:704.15px;font-size:14px;line-height:14px;color:#1f2329;font-weight:400;"><span style="color:#1f2329">1 шт</span> <b style="color:#1450f0;font-size:15px">+1</b></div><div class="a t" style="left:748.50px;width:600px;text-align:center;top:727.15px;font-size:14px;line-height:14px;color:#1f2329;font-weight:400;"><span style="color:#8c8c8c">0 шт</span></div><div class="a t" style="left:748.50px;width:600px;text-align:center;top:749.15px;font-size:14px;line-height:14px;color:#1f2329;font-weight:400;"><span style="color:#8c8c8c">0 шт</span></div><div class="a t" style="left:748.50px;width:600px;text-align:center;top:771.15px;font-size:14px;line-height:14px;color:#1f2329;font-weight:400;"><span style="color:#8c8c8c">0 дн</span></div><div class="a" style="left:1130px;top:722px;width:107px;height:1px;background:#d6dbe0"></div><div class="a" style="left:1130px;top:744px;width:107px;height:1px;background:#d6dbe0"></div><div class="a" style="left:1130px;top:766px;width:107px;height:1px;background:#d6dbe0"></div><div class="a t" style="left:883.50px;width:600px;text-align:center;top:704.15px;font-size:14px;line-height:14px;color:#1f2329;font-weight:400;"><span style="color:#8c8c8c">0 шт</span></div><div class="a t" style="left:883.50px;width:600px;text-align:center;top:727.15px;font-size:14px;line-height:14px;color:#1f2329;font-weight:400;"><span style="color:#8c8c8c">0 шт</span></div><div class="a t" style="left:883.50px;width:600px;text-align:center;top:749.15px;font-size:14px;line-height:14px;color:#1f2329;font-weight:400;"><span style="color:#8c8c8c">0 шт</span></div><div class="a t" style="left:883.50px;width:600px;text-align:center;top:771.15px;font-size:14px;line-height:14px;color:#1f2329;font-weight:400;"><span style="color:#8c8c8c">0 дн</span></div><div class="a" style="left:1265px;top:722px;width:107px;height:1px;background:#d6dbe0"></div><div class="a" style="left:1265px;top:744px;width:107px;height:1px;background:#d6dbe0"></div><div class="a" style="left:1265px;top:766px;width:107px;height:1px;background:#d6dbe0"></div><div class="a t" style="left:1018.50px;width:600px;text-align:center;top:704.15px;font-size:14px;line-height:14px;color:#1f2329;font-weight:400;"><span style="color:#8c8c8c">0 шт</span></div><div class="a t" style="left:1018.50px;width:600px;text-align:center;top:727.15px;font-size:14px;line-height:14px;color:#1f2329;font-weight:400;"><span style="color:#8c8c8c">0 шт</span></div><div class="a t" style="left:1018.50px;width:600px;text-align:center;top:749.15px;font-size:14px;line-height:14px;color:#1f2329;font-weight:400;"><span style="color:#8c8c8c">0 шт</span></div><div class="a t" style="left:1018.50px;width:600px;text-align:center;top:771.15px;font-size:14px;line-height:14px;color:#1f2329;font-weight:400;"><span style="color:#8c8c8c">0 дн</span></div><div class="a" style="left:1400px;top:722px;width:107px;height:1px;background:#d6dbe0"></div><div class="a" style="left:1400px;top:744px;width:107px;height:1px;background:#d6dbe0"></div><div class="a" style="left:1400px;top:766px;width:107px;height:1px;background:#d6dbe0"></div><div class="a t" style="left:1153.50px;width:600px;text-align:center;top:704.15px;font-size:14px;line-height:14px;color:#1f2329;font-weight:400;"><span style="color:#1f2329">1 шт</span></div><div class="a t" style="left:1153.50px;width:600px;text-align:center;top:727.15px;font-size:14px;line-height:14px;color:#1f2329;font-weight:400;"><span style="color:#1f2329">30 шт</span></div><div class="a t" style="left:1153.50px;width:600px;text-align:center;top:749.15px;font-size:14px;line-height:14px;color:#1f2329;font-weight:400;"><span style="color:#8c8c8c">0 шт</span></div><div class="a t" style="left:1153.50px;width:600px;text-align:center;top:771.15px;font-size:14px;line-height:14px;color:#1f2329;font-weight:400;"><span style="color:#8c8c8c">0 дн</span></div><div class="a" style="left:1535px;top:722px;width:107px;height:1px;background:#d6dbe0"></div><div class="a" style="left:1535px;top:744px;width:107px;height:1px;background:#d6dbe0"></div><div class="a" style="left:1535px;top:766px;width:107px;height:1px;background:#d6dbe0"></div><div class="a t" style="left:1288.50px;width:600px;text-align:center;top:704.15px;font-size:14px;line-height:14px;color:#1f2329;font-weight:400;"><span style="color:#8c8c8c">0 шт</span></div><div class="a t" style="left:1288.50px;width:600px;text-align:center;top:727.15px;font-size:14px;line-height:14px;color:#1f2329;font-weight:400;"><span style="color:#8c8c8c">0 шт</span></div><div class="a t" style="left:1288.50px;width:600px;text-align:center;top:749.15px;font-size:14px;line-height:14px;color:#1f2329;font-weight:400;"><span style="color:#8c8c8c">0 шт</span></div><div class="a t" style="left:1288.50px;width:600px;text-align:center;top:771.15px;font-size:14px;line-height:14px;color:#1f2329;font-weight:400;"><span style="color:#8c8c8c">0 дн</span></div><div class="a" style="left:1670px;top:722px;width:107px;height:1px;background:#d6dbe0"></div><div class="a" style="left:1670px;top:744px;width:107px;height:1px;background:#d6dbe0"></div><div class="a" style="left:1670px;top:766px;width:107px;height:1px;background:#d6dbe0"></div><div class="a t" style="left:1423.50px;width:600px;text-align:center;top:704.15px;font-size:14px;line-height:14px;color:#1f2329;font-weight:400;"><span style="color:#8c8c8c">0 шт</span></div><div class="a t" style="left:1423.50px;width:600px;text-align:center;top:727.15px;font-size:14px;line-height:14px;color:#1f2329;font-weight:400;"><span style="color:#8c8c8c">0 шт</span></div><div class="a t" style="left:1423.50px;width:600px;text-align:center;top:749.15px;font-size:14px;line-height:14px;color:#1f2329;font-weight:400;"><span style="color:#8c8c8c">0 шт</span></div><div class="a t" style="left:1423.50px;width:600px;text-align:center;top:771.15px;font-size:14px;line-height:14px;color:#1f2329;font-weight:400;"><span style="color:#8c8c8c">0 дн</span></div></div><div class="a" style="left:58px;top:999px;width:1804px;height:15px;background:#f8f8f8;border-radius:0 0 5px 5px"></div><div class="a" style="left:58px;top:999px;width:1789px;height:1px;background:#ececec"></div><div class="a" style="left:61px;top:1003px;width:594px;height:8px;background:#c1c1c1;border-radius:4px"></div><div class="a" style="left:1847px;top:152px;width:15px;height:847px;background:#f8f8f8;border-left:1px solid #ececec;border-radius:0 5px 0 0"></div><div class="a" style="left:1851px;top:193px;width:8px;height:153px;background:#c1c1c1;border-radius:4px"></div><div class="a" style="left:57px;top:151px;width:1806px;height:864px;border:1px solid #d0d6dc;border-radius:6px"></div>
</body></html>
